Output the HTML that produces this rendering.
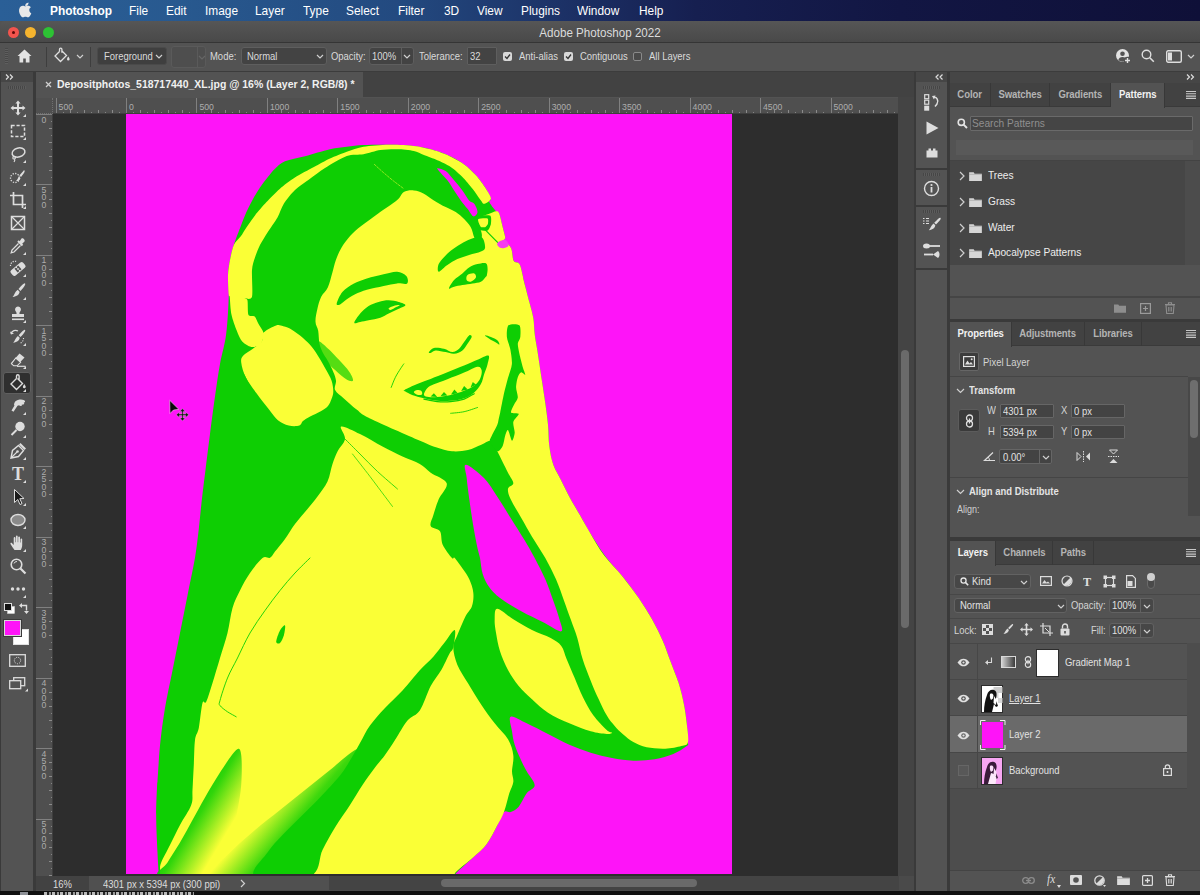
<!DOCTYPE html>
<html><head><meta charset="utf-8"><title>Adobe Photoshop 2022</title>
<style>
*{box-sizing:border-box;margin:0;padding:0}
html,body{width:1200px;height:895px;overflow:hidden;background:#1a1a1a}
body{font-family:"Liberation Sans",sans-serif;color:#e6e6e6;font-size:11px;-webkit-font-smoothing:antialiased}
#app{position:relative;width:1200px;height:895px;overflow:hidden;background:#535353}
.a{position:absolute}
i{display:block;position:absolute;font-style:normal}
svg{position:absolute;overflow:visible}
#menubar{left:0;top:0;width:1200px;height:21px;background:linear-gradient(90deg,#2a5f97 0%,#28598f 15%,#234a80 33%,#1c3166 47%,#161f50 58%,#121643 75%,#0f1038 100%)}
#menubar span{position:absolute;top:3px;font-size:13.2px;color:#fff;letter-spacing:0;white-space:nowrap}
#menubar span.b{font-weight:bold}
#titlebar{left:0;top:21px;width:1200px;height:21px;background:linear-gradient(#565656,#494949);border-top-left-radius:5px}
#titlebar .t{position:absolute;left:0;width:1200px;text-align:center;top:5px;font-size:12.5px;color:#dcdcdc}
.tl{position:absolute;top:6px;width:11px;height:11px;border-radius:50%}
#optbar{left:0;top:42px;width:1200px;height:30px;background:#535353;border-top:1.500px solid #353535;border-bottom:1px solid #3c3c3c}
#optbar span{position:absolute;font-size:10.5px;color:#dadada;white-space:nowrap;top:7px}
.dd{position:absolute;background:#434343;border:1px solid #606060;border-radius:3px}
.inp{position:absolute;background:#434343;border:1px solid #666;border-radius:1px}
#tabbar{left:36px;top:72px;width:878px;height:25px;background:#424242}
#tab{left:36px;top:72px;width:327px;height:25px;background:#535353}
#tab span{position:absolute;left:21px;top:6px;font-size:10.6px;font-weight:bold;color:#f0f0f0;white-space:nowrap}
#hruler{position:absolute;left:53px;top:98px;width:845px;height:16px;background:#4f4f4f;overflow:hidden;border-bottom:1px solid #3e3e3e}
#vruler{position:absolute;left:36px;top:114px;width:17px;height:762px;background:#4f4f4f;overflow:hidden;border-right:1px solid #3e3e3e}
#rcorner{position:absolute;left:36px;top:98px;width:17px;height:16px;background:#4f4f4f;border-right:1px dotted #707070;border-bottom:1px dotted #707070}
#hruler i.ht{top:0;width:1px;height:16px;background:#808080;margin-left:-53px}
#hruler i.hm{top:12px;width:1px;height:3px;background:#8a8a8a;margin-left:-53px}
#hruler i.hs{top:13.500px;width:1px;height:1.500px;background:#858585;margin-left:-53px}
#hruler span.hl{position:absolute;top:4px;font-size:8.700px;color:#adadad;margin-left:-53px}
#vruler i.vt{left:0;height:1px;width:17px;background:#808080;margin-top:-114px}
#vruler i.vm{left:13px;height:1px;width:3px;background:#8a8a8a;margin-top:-114px}
#vruler i.vs{left:14.500px;height:1px;width:1.500px;background:#858585;margin-top:-114px}
#vruler span.vl{position:absolute;left:4px;width:8px;font-size:8.700px;line-height:7.400px;color:#adadad;margin-top:-114px;text-align:center}
#canvas{position:absolute;left:53px;top:114px;width:845px;height:762px;background:#2d2d2d}
#left{left:0;top:72px;width:36px;height:823px;background:#535353;border-right:3px solid #3a3a3a;border-left:1px solid #3a3a3a}
#status{left:36px;top:876px;width:878px;height:15px;background:#4a4a4a}
#status span{position:absolute;top:2px;font-size:10.5px;color:#dcdcdc;white-space:nowrap}
#vscroll{left:898px;top:97px;width:16px;height:779px;background:#444}
#bottomstrip{left:0;top:891px;width:1200px;height:4px;background:#101010;z-index:50}
.panel{overflow:hidden}
.panel .tabs{position:absolute;left:0;top:0;width:250px;height:24px;background:#424242;border-bottom:1px solid #3a3a3a}
.panel .tb{position:absolute;top:0;height:24px;line-height:23px;text-align:center;font-size:10.600px;font-weight:bold;color:#b4b4b4;border-right:1px solid #383838;letter-spacing:-.1px}
.panel .tb.on{background:#535353;color:#f2f2f2;height:25px}
.panel .mn{left:236px;top:8px;width:10px;height:8px}
.tx{position:absolute;white-space:nowrap;color:#e2e2e2;line-height:1.150}
.prow{position:absolute;left:0;width:235px;height:25px}
.prow .ch{left:9px;top:7px;width:6px;height:10px}
.prow .fd{left:19px;top:7px;width:13px;height:10px}
.prow span{position:absolute;left:38px;top:5px;font-size:11.300px;color:#ededed;white-space:nowrap}
.eye{left:7px;width:13px;height:9px}
#menubar span,#optbar span,.tx,.prow span,#status span{transform:scaleX(.9);transform-origin:0 50%}
.panel .tb{font-size:10.600px}
.panel .tb b{display:inline-block;font-weight:bold;transform:scaleX(.9)}
#titlebar .t{transform:scaleX(.93)}
#tab span{transform:scaleX(.988);transform-origin:0 50%}

</style></head>
<body>
<div id="app">
<div id="menubar" class="a">
<svg style="left:19px;top:2px" width="13" height="16" viewBox="0 0 13 16"><path d="M9.1 3.1c.6-.7 1-1.700.9-2.700-.9.100-1.900.6-2.500 1.300-.5.600-1 1.600-.9 2.600 1 .1 1.900-.5 2.500-1.200zM10.800 8.500c0-2 1.600-2.900 1.700-3-.9-1.400-2.400-1.500-2.900-1.600-1.200-.1-2.400.7-3 .7-.6 0-1.600-.7-2.600-.7C2.700 4 1.400 4.800.7 6-.7 8.500.3 12.100 1.700 14.100c.7 1 1.500 2.100 2.500 2 1-.1 1.400-.6 2.600-.6s1.500.6 2.600.6 1.800-1 2.400-2c.8-1.100 1.100-2.200 1.100-2.300-.1 0-2.100-.8-2.100-3.300z" fill="#e8e8e8" transform="scale(.95)"/></svg>
<span class="b" style="left:50px">Photoshop</span>
<span style="left:129px">File</span>
<span style="left:166px">Edit</span>
<span style="left:205px">Image</span>
<span style="left:255px">Layer</span>
<span style="left:303px">Type</span>
<span style="left:346px">Select</span>
<span style="left:398px">Filter</span>
<span style="left:444px">3D</span>
<span style="left:477px">View</span>
<span style="left:521px">Plugins</span>
<span style="left:577px">Window</span>
<span style="left:639px">Help</span>
</div>
<div id="titlebar" class="a">
<i class="tl" style="left:8px;background:#f2544d"></i><i style="left:12px;top:10px;width:3px;height:3px;border-radius:50%;background:#5c0a08"></i>
<i class="tl" style="left:25px;background:#f6b42e"></i>
<i class="tl" style="left:43px;background:#2dc234"></i>
<div class="t">Adobe Photoshop 2022</div>
</div>
<div id="optbar" class="a">
<i style="left:5px;top:5px;width:3px;height:16px;background:repeating-linear-gradient(#484848 0 1px,#5e5e5e 1px 2px)"></i>
<svg style="left:17px;top:6px" width="15" height="14" viewBox="0 0 15 14"><path d="M7.500.5L.5 7h2v6.500h3.700V9.500h2.600v4h3.700V7h2z" fill="#e4e4e4"/></svg>
<i style="left:46px;top:4px;width:1px;height:20px;background:#3e3e3e"></i>
<svg style="left:53px;top:4px" width="20" height="18" viewBox="0 0 20 18"><path d="M6.500 4.500L2 9l5.500 5.500 6-6-5-5M6.500 4.500V2.300a1.200 1.200 0 012.400 0v3.500" fill="none" stroke="#e0e0e0" stroke-width="1.300"/><path d="M15.300 9.500c.8 1.300 1.300 2 1.300 2.700a1.300 1.300 0 01-2.600 0c0-.7.500-1.400 1.300-2.700z" fill="#e0e0e0"/></svg>
<svg style="left:76px;top:11px" width="8" height="5" viewBox="0 0 8 5"><path d="M1 1l3 3 3-3" fill="none" stroke="#d0d0d0" stroke-width="1.200"/></svg>
<i style="left:90px;top:4px;width:1px;height:20px;background:#3e3e3e"></i>
<div class="dd" style="left:97px;top:4px;width:70px;height:18px;background:#3f3f3f;border-color:#4a4a4a"></div>
<span style="left:104px">Foreground</span>
<svg style="left:155px;top:11px" width="8" height="5" viewBox="0 0 8 5"><path d="M1 1l3 3 3-3" fill="none" stroke="#d0d0d0" stroke-width="1.200"/></svg>
<div class="dd" style="left:171px;top:3px;width:35px;height:22px;background:#4e4e4e;border-color:#5a5a5a"></div>
<i style="left:197px;top:4px;width:1px;height:20px;background:#5a5a5a"></i>
<svg style="left:198px;top:12px" width="8" height="5" viewBox="0 0 8 5"><path d="M1 1l3 3 3-3" fill="none" stroke="#666" stroke-width="1.200"/></svg>
<span style="left:210px">Mode:</span>
<div class="dd" style="left:241px;top:4px;width:86px;height:18px;background:#434343;border-color:#5e5e5e"></div>
<span style="left:247px">Normal</span>
<svg style="left:316px;top:11px" width="8" height="5" viewBox="0 0 8 5"><path d="M1 1l3 3 3-3" fill="none" stroke="#d0d0d0" stroke-width="1.200"/></svg>
<span style="left:331px">Opacity:</span>
<div class="dd" style="left:369px;top:4px;width:45px;height:18px;background:#434343;border-color:#5e5e5e"></div>
<i style="left:401px;top:5px;width:1px;height:16px;background:#5e5e5e"></i>
<span style="left:372px">100%</span>
<svg style="left:403px;top:11px" width="8" height="5" viewBox="0 0 8 5"><path d="M1 1l3 3 3-3" fill="none" stroke="#d0d0d0" stroke-width="1.200"/></svg>
<span style="left:419px">Tolerance:</span>
<div class="dd" style="left:467px;top:4px;width:30px;height:18px;background:#434343;border-color:#5e5e5e;border-radius:1px"></div>
<span style="left:470px">32</span>
<i style="left:503px;top:9px;width:9px;height:9px;border-radius:2px;background:#d8d8d8"></i>
<svg style="left:504px;top:10px" width="7" height="7" viewBox="0 0 7 7"><path d="M1 3.500l2 2 3-4" fill="none" stroke="#333" stroke-width="1.300"/></svg>
<span style="left:519px">Anti-alias</span>
<i style="left:564px;top:9px;width:9px;height:9px;border-radius:2px;background:#d8d8d8"></i>
<svg style="left:565px;top:10px" width="7" height="7" viewBox="0 0 7 7"><path d="M1 3.500l2 2 3-4" fill="none" stroke="#333" stroke-width="1.300"/></svg>
<span style="left:580px">Contiguous</span>
<i style="left:633px;top:9px;width:9px;height:9px;border-radius:2px;border:1px solid #8a8a8a;background:#4a4a4a"></i>
<span style="left:649px">All Layers</span>
<!-- right icons -->
<svg style="left:1115px;top:5px" width="17" height="17" viewBox="0 0 17 17"><circle cx="7.500" cy="7.500" r="6.500" fill="#e2e2e2"/><circle cx="7.500" cy="5.800" r="2.300" fill="#535353"/><path d="M3.300 12c.6-2 2-3 4.200-3s3.600 1 4.200 3a6 6 0 01-8.400 0z" fill="#535353"/><circle cx="12.500" cy="12.500" r="3.800" fill="#535353"/><path d="M12.500 10v5M10 12.500h5" stroke="#e2e2e2" stroke-width="1.400"/></svg>
<svg style="left:1141px;top:6px" width="14" height="14" viewBox="0 0 14 14"><circle cx="5.500" cy="5.500" r="4.300" fill="none" stroke="#dedede" stroke-width="1.400"/><path d="M8.800 8.800l4 4" stroke="#dedede" stroke-width="1.600"/></svg>
<svg style="left:1166px;top:7px" width="16" height="13" viewBox="0 0 16 13"><rect x=".7" y=".7" width="14.600" height="11.600" rx="1.500" fill="none" stroke="#dedede" stroke-width="1.400"/><rect x="2" y="2.500" width="4" height="8" fill="#dedede"/></svg>
<svg style="left:1187px;top:11px" width="8" height="5" viewBox="0 0 8 5"><path d="M1 1l3 3 3-3" fill="none" stroke="#d0d0d0" stroke-width="1.200"/></svg>
</div>
<div id="tabbar" class="a"></div>
<div id="tab" class="a"><svg style="left:9px;top:9px" width="7" height="7" viewBox="0 0 7 7"><path d="M1 1l5 5M6 1L1 6" stroke="#cfcfcf" stroke-width="1.300"/></svg><span>Depositphotos_518717440_XL.jpg @ 16% (Layer 2, RGB/8) *</span></div>
<div id="vscroll" class="a"><i style="left:3px;top:253px;width:8px;height:278px;border-radius:4px;background:#6a6a6a"></i></div>
<div id="status" class="a">
<i style="left:0;top:0;width:53px;height:14px;background:#424242"></i>
<span style="left:17px">16%</span>
<i style="left:53px;top:0;width:240px;height:14px;background:#505050"></i>
<span style="left:67px">4301 px x 5394 px (300 ppi)</span>
<svg style="left:204px;top:3px" width="6" height="9" viewBox="0 0 6 9"><path d="M1 1l3.500 3.500L1 8" fill="none" stroke="#d0d0d0" stroke-width="1.200"/></svg>
<i style="left:293px;top:0;width:570px;height:14px;background:#444"></i>
<i style="left:405px;top:3px;width:256px;height:8px;border-radius:4px;background:#6a6a6a"></i>
</div>
<div id="bottomstrip" class="a"><i style="left:20px;top:1px;width:8px;height:3px;background:#8d9096"></i><i style="left:44px;top:1px;width:150px;height:3px;background:repeating-linear-gradient(90deg,#b9b9b9 0 3px,#222 3px 5px,#999 5px 7px,#1a1a1a 7px 8px)"></i></div>

<div id="hruler"><i class="ht" style="left:55.6px"></i><span class="hl" style="left:58.6px">500</span><i class="ht" style="left:126.0px"></i><span class="hl" style="left:129.0px">0</span><i class="ht" style="left:196.4px"></i><span class="hl" style="left:199.4px">500</span><i class="ht" style="left:266.9px"></i><span class="hl" style="left:269.9px">1000</span><i class="ht" style="left:337.3px"></i><span class="hl" style="left:340.3px">1500</span><i class="ht" style="left:407.8px"></i><span class="hl" style="left:410.8px">2000</span><i class="ht" style="left:478.2px"></i><span class="hl" style="left:481.2px">2500</span><i class="ht" style="left:548.7px"></i><span class="hl" style="left:551.7px">3000</span><i class="ht" style="left:619.1px"></i><span class="hl" style="left:622.1px">3500</span><i class="ht" style="left:689.6px"></i><span class="hl" style="left:692.6px">4000</span><i class="ht" style="left:760.0px"></i><span class="hl" style="left:763.0px">4500</span><i class="ht" style="left:830.5px"></i><span class="hl" style="left:833.5px">5000</span><i class="hs" style="left:62.6px"></i><i class="hm" style="left:69.6px"></i><i class="hs" style="left:76.7px"></i><i class="hm" style="left:83.7px"></i><i class="hs" style="left:90.8px"></i><i class="hm" style="left:97.8px"></i><i class="hs" style="left:104.9px"></i><i class="hm" style="left:111.9px"></i><i class="hs" style="left:119.0px"></i><i class="hs" style="left:133.0px"></i><i class="hm" style="left:140.1px"></i><i class="hs" style="left:147.1px"></i><i class="hm" style="left:154.2px"></i><i class="hs" style="left:161.2px"></i><i class="hm" style="left:168.3px"></i><i class="hs" style="left:175.3px"></i><i class="hm" style="left:182.4px"></i><i class="hs" style="left:189.4px"></i><i class="hs" style="left:203.5px"></i><i class="hm" style="left:210.5px"></i><i class="hs" style="left:217.6px"></i><i class="hm" style="left:224.6px"></i><i class="hs" style="left:231.7px"></i><i class="hm" style="left:238.7px"></i><i class="hs" style="left:245.8px"></i><i class="hm" style="left:252.8px"></i><i class="hs" style="left:259.9px"></i><i class="hs" style="left:273.9px"></i><i class="hm" style="left:281.0px"></i><i class="hs" style="left:288.0px"></i><i class="hm" style="left:295.1px"></i><i class="hs" style="left:302.1px"></i><i class="hm" style="left:309.2px"></i><i class="hs" style="left:316.2px"></i><i class="hm" style="left:323.3px"></i><i class="hs" style="left:330.3px"></i><i class="hs" style="left:344.4px"></i><i class="hm" style="left:351.4px"></i><i class="hs" style="left:358.5px"></i><i class="hm" style="left:365.5px"></i><i class="hs" style="left:372.6px"></i><i class="hm" style="left:379.6px"></i><i class="hs" style="left:386.7px"></i><i class="hm" style="left:393.7px"></i><i class="hs" style="left:400.8px"></i><i class="hs" style="left:414.8px"></i><i class="hm" style="left:421.9px"></i><i class="hs" style="left:428.9px"></i><i class="hm" style="left:436.0px"></i><i class="hs" style="left:443.0px"></i><i class="hm" style="left:450.1px"></i><i class="hs" style="left:457.1px"></i><i class="hm" style="left:464.2px"></i><i class="hs" style="left:471.2px"></i><i class="hs" style="left:485.3px"></i><i class="hm" style="left:492.3px"></i><i class="hs" style="left:499.4px"></i><i class="hm" style="left:506.4px"></i><i class="hs" style="left:513.5px"></i><i class="hm" style="left:520.5px"></i><i class="hs" style="left:527.6px"></i><i class="hm" style="left:534.6px"></i><i class="hs" style="left:541.6px"></i><i class="hs" style="left:555.7px"></i><i class="hm" style="left:562.8px"></i><i class="hs" style="left:569.8px"></i><i class="hm" style="left:576.9px"></i><i class="hs" style="left:583.9px"></i><i class="hm" style="left:591.0px"></i><i class="hs" style="left:598.0px"></i><i class="hm" style="left:605.1px"></i><i class="hs" style="left:612.1px"></i><i class="hs" style="left:626.2px"></i><i class="hm" style="left:633.2px"></i><i class="hs" style="left:640.3px"></i><i class="hm" style="left:647.3px"></i><i class="hs" style="left:654.4px"></i><i class="hm" style="left:661.4px"></i><i class="hs" style="left:668.5px"></i><i class="hm" style="left:675.5px"></i><i class="hs" style="left:682.5px"></i><i class="hs" style="left:696.6px"></i><i class="hm" style="left:703.7px"></i><i class="hs" style="left:710.7px"></i><i class="hm" style="left:717.8px"></i><i class="hs" style="left:724.8px"></i><i class="hm" style="left:731.9px"></i><i class="hs" style="left:738.9px"></i><i class="hm" style="left:745.9px"></i><i class="hs" style="left:753.0px"></i><i class="hs" style="left:767.1px"></i><i class="hm" style="left:774.1px"></i><i class="hs" style="left:781.2px"></i><i class="hm" style="left:788.2px"></i><i class="hs" style="left:795.3px"></i><i class="hm" style="left:802.3px"></i><i class="hs" style="left:809.4px"></i><i class="hm" style="left:816.4px"></i><i class="hs" style="left:823.4px"></i><i class="hs" style="left:837.5px"></i><i class="hm" style="left:844.6px"></i><i class="hs" style="left:851.6px"></i><i class="hm" style="left:858.7px"></i><i class="hs" style="left:865.7px"></i><i class="hm" style="left:872.8px"></i><i class="hs" style="left:879.8px"></i><i class="hm" style="left:886.8px"></i><i class="hs" style="left:893.9px"></i></div>
<div id="vruler"><i class="vt" style="top:114.0px"></i><span class="vl" style="top:116.5px">0</span><i class="vt" style="top:184.4px"></i><span class="vl" style="top:186.9px">5<br>0<br>0</span><i class="vt" style="top:254.9px"></i><span class="vl" style="top:257.4px">1<br>0<br>0<br>0</span><i class="vt" style="top:325.3px"></i><span class="vl" style="top:327.8px">1<br>5<br>0<br>0</span><i class="vt" style="top:395.8px"></i><span class="vl" style="top:398.3px">2<br>0<br>0<br>0</span><i class="vt" style="top:466.2px"></i><span class="vl" style="top:468.7px">2<br>5<br>0<br>0</span><i class="vt" style="top:536.7px"></i><span class="vl" style="top:539.2px">3<br>0<br>0<br>0</span><i class="vt" style="top:607.1px"></i><span class="vl" style="top:609.6px">3<br>5<br>0<br>0</span><i class="vt" style="top:677.6px"></i><span class="vl" style="top:680.1px">4<br>0<br>0<br>0</span><i class="vt" style="top:748.0px"></i><span class="vl" style="top:750.5px">4<br>5<br>0<br>0</span><i class="vt" style="top:818.5px"></i><span class="vl" style="top:821.0px">5<br>0<br>0<br>0</span><i class="vs" style="top:121.0px"></i><i class="vm" style="top:128.1px"></i><i class="vs" style="top:135.1px"></i><i class="vm" style="top:142.2px"></i><i class="vs" style="top:149.2px"></i><i class="vm" style="top:156.3px"></i><i class="vs" style="top:163.3px"></i><i class="vm" style="top:170.4px"></i><i class="vs" style="top:177.4px"></i><i class="vs" style="top:191.5px"></i><i class="vm" style="top:198.5px"></i><i class="vs" style="top:205.6px"></i><i class="vm" style="top:212.6px"></i><i class="vs" style="top:219.7px"></i><i class="vm" style="top:226.7px"></i><i class="vs" style="top:233.8px"></i><i class="vm" style="top:240.8px"></i><i class="vs" style="top:247.9px"></i><i class="vs" style="top:261.9px"></i><i class="vm" style="top:269.0px"></i><i class="vs" style="top:276.0px"></i><i class="vm" style="top:283.1px"></i><i class="vs" style="top:290.1px"></i><i class="vm" style="top:297.2px"></i><i class="vs" style="top:304.2px"></i><i class="vm" style="top:311.3px"></i><i class="vs" style="top:318.3px"></i><i class="vs" style="top:332.4px"></i><i class="vm" style="top:339.4px"></i><i class="vs" style="top:346.5px"></i><i class="vm" style="top:353.5px"></i><i class="vs" style="top:360.6px"></i><i class="vm" style="top:367.6px"></i><i class="vs" style="top:374.7px"></i><i class="vm" style="top:381.7px"></i><i class="vs" style="top:388.8px"></i><i class="vs" style="top:402.8px"></i><i class="vm" style="top:409.9px"></i><i class="vs" style="top:416.9px"></i><i class="vm" style="top:424.0px"></i><i class="vs" style="top:431.0px"></i><i class="vm" style="top:438.1px"></i><i class="vs" style="top:445.1px"></i><i class="vm" style="top:452.2px"></i><i class="vs" style="top:459.2px"></i><i class="vs" style="top:473.3px"></i><i class="vm" style="top:480.3px"></i><i class="vs" style="top:487.4px"></i><i class="vm" style="top:494.4px"></i><i class="vs" style="top:501.5px"></i><i class="vm" style="top:508.5px"></i><i class="vs" style="top:515.6px"></i><i class="vm" style="top:522.6px"></i><i class="vs" style="top:529.6px"></i><i class="vs" style="top:543.7px"></i><i class="vm" style="top:550.8px"></i><i class="vs" style="top:557.8px"></i><i class="vm" style="top:564.9px"></i><i class="vs" style="top:571.9px"></i><i class="vm" style="top:579.0px"></i><i class="vs" style="top:586.0px"></i><i class="vm" style="top:593.1px"></i><i class="vs" style="top:600.1px"></i><i class="vs" style="top:614.2px"></i><i class="vm" style="top:621.2px"></i><i class="vs" style="top:628.3px"></i><i class="vm" style="top:635.3px"></i><i class="vs" style="top:642.4px"></i><i class="vm" style="top:649.4px"></i><i class="vs" style="top:656.5px"></i><i class="vm" style="top:663.5px"></i><i class="vs" style="top:670.5px"></i><i class="vs" style="top:684.6px"></i><i class="vm" style="top:691.7px"></i><i class="vs" style="top:698.7px"></i><i class="vm" style="top:705.8px"></i><i class="vs" style="top:712.8px"></i><i class="vm" style="top:719.9px"></i><i class="vs" style="top:726.9px"></i><i class="vm" style="top:733.9px"></i><i class="vs" style="top:741.0px"></i><i class="vs" style="top:755.1px"></i><i class="vm" style="top:762.1px"></i><i class="vs" style="top:769.2px"></i><i class="vm" style="top:776.2px"></i><i class="vs" style="top:783.3px"></i><i class="vm" style="top:790.3px"></i><i class="vs" style="top:797.4px"></i><i class="vm" style="top:804.4px"></i><i class="vs" style="top:811.4px"></i><i class="vs" style="top:825.5px"></i><i class="vm" style="top:832.6px"></i><i class="vs" style="top:839.6px"></i><i class="vm" style="top:846.7px"></i><i class="vs" style="top:853.7px"></i><i class="vm" style="top:860.8px"></i><i class="vs" style="top:867.8px"></i><i class="vm" style="top:874.8px"></i></div>
<div id="rcorner"></div>
<div id="canvas"></div>
<svg id="art" style="left:0;top:0" width="1200" height="895" viewBox="0 0 1200 895">
<defs><clipPath id="ac"><rect x="126" y="114" width="606" height="760"/></clipPath>
<linearGradient id="st1" gradientUnits="userSpaceOnUse" x1="192" y1="800" x2="232" y2="824"><stop offset="0" stop-color="#0ece03"/><stop offset="0.3" stop-color="#0ece03" stop-opacity="0.85"/><stop offset="1" stop-color="#0ece03" stop-opacity="0"/></linearGradient>
<linearGradient id="st2" gradientUnits="userSpaceOnUse" x1="272" y1="800" x2="312" y2="834"><stop offset="0" stop-color="#0ece03" stop-opacity="0"/><stop offset="0.6" stop-color="#0ece03" stop-opacity="0.8"/><stop offset="1" stop-color="#0ece03" stop-opacity="1"/></linearGradient>
</defs>
<rect x="126" y="114" width="606" height="760" fill="#fe14f8"/>
<g clip-path="url(#ac)">
<path d="M305.0 156.2C297.5 158.2 290.0 159.2 285.0 161.2C280.0 163.3 277.9 166.0 275.0 168.8C272.1 171.5 270.0 174.4 267.5 177.5C265.0 180.6 262.5 183.8 260.0 187.5C257.5 191.2 254.8 195.8 252.5 200.0C250.2 204.2 248.1 208.3 246.2 212.5C244.4 216.7 243.3 219.6 241.2 225.0C239.2 230.4 235.6 239.2 233.8 245.0C231.9 250.8 231.0 255.0 230.0 260.0C229.0 265.0 228.2 269.2 228.0 275.0C227.8 280.8 229.0 285.2 228.8 295.0C228.5 304.8 227.7 322.2 226.2 333.8C224.8 345.2 221.9 353.5 220.0 364.0C218.1 374.5 216.7 384.8 215.0 396.5C213.3 408.2 211.5 422.8 210.0 434.0C208.5 445.2 207.5 454.0 206.2 464.0C205.0 474.0 203.8 483.2 202.5 494.0C201.2 504.8 200.0 518.4 198.8 529.0C197.5 539.6 196.9 546.7 195.0 557.8C193.1 568.8 190.0 583.0 187.5 595.5C185.0 608.0 182.5 620.5 180.0 633.0C177.5 645.5 175.0 658.0 172.5 670.5C170.0 683.0 167.1 695.5 165.0 708.0C162.9 720.5 161.2 733.2 160.0 745.5C158.8 757.8 157.9 776.4 157.5 781.8C157.1 787.1 157.7 772.0 157.5 777.5C157.3 783.0 156.2 802.5 156.2 815.0C156.2 827.5 157.1 842.5 157.5 852.5C157.9 862.5 158.5 870.4 158.8 875.0C159.0 879.6 159.0 875.8 159.0 880.0C159.0 884.2 109.7 896.7 159.0 900.0C208.3 903.3 405.7 903.3 455.0 900.0C504.3 896.7 455.1 884.2 455.0 880.0C454.9 875.8 451.6 878.4 454.7 874.7C457.7 870.9 468.0 862.4 473.3 857.3C478.7 852.2 482.7 849.3 486.7 844.0C490.7 838.7 494.4 830.7 497.3 825.3C500.2 820.0 501.8 814.2 504.0 812.0C506.2 809.8 508.2 812.9 510.7 812.0C513.1 811.1 516.0 809.8 518.7 806.7C521.3 803.6 524.0 796.9 526.7 793.3C529.3 789.8 534.7 789.0 534.7 785.3C534.7 781.7 528.9 775.4 526.7 771.3C524.4 767.2 523.3 765.1 521.3 760.7C519.3 756.2 516.2 749.6 514.7 744.7C513.1 739.8 512.7 736.0 512.0 731.3C511.3 726.7 508.2 718.0 510.7 716.7C513.1 715.3 520.4 720.4 526.7 723.3C532.9 726.2 540.9 730.4 548.0 734.0C555.1 737.6 562.2 741.6 569.3 744.7C576.4 747.8 583.6 750.4 590.7 752.7C597.8 754.9 604.9 756.7 612.0 758.0C619.1 759.3 626.2 760.4 633.3 760.7C640.4 760.9 648.0 760.4 654.7 759.3C661.3 758.2 668.0 756.2 673.3 754.0C678.7 751.8 684.2 748.0 686.7 746.0C689.1 744.0 688.0 745.8 688.0 742.0C688.0 738.2 687.3 729.6 686.7 723.3C686.0 717.1 685.3 711.3 684.0 704.7C682.7 698.0 680.9 690.4 678.7 683.3C676.4 676.2 673.3 669.1 670.7 662.0C668.0 654.9 665.8 647.8 662.7 640.7C659.6 633.6 656.0 626.4 652.0 619.3C648.0 612.2 643.6 605.1 638.7 598.0C633.8 590.9 628.0 583.3 622.7 576.7C617.3 570.0 612.0 565.1 606.7 558.0C601.3 550.9 595.1 541.1 590.7 534.0C586.2 526.9 583.6 521.6 580.0 515.3C576.4 509.1 572.4 502.4 569.3 496.7C566.2 490.9 564.0 486.0 561.3 480.7C558.7 475.3 555.3 470.4 553.3 464.7C551.3 458.9 550.2 452.7 549.3 446.0C548.4 439.3 548.7 431.8 548.0 424.7C547.3 417.6 546.4 411.3 545.3 403.3C544.2 395.3 542.7 385.6 541.3 376.7C540.0 367.8 538.4 357.1 537.3 350.0C536.2 342.9 535.3 339.3 534.7 334.0C534.0 328.7 534.2 323.3 533.3 318.0C532.4 312.7 531.0 308.3 529.3 302.0C527.7 295.7 524.7 284.4 523.6 280.0C522.5 275.7 523.5 278.5 522.8 275.9C522.1 273.2 521.0 266.6 519.4 264.1C517.9 261.6 515.0 263.4 513.6 260.8C512.2 258.1 512.6 251.5 511.1 248.2C509.5 244.8 505.3 242.5 504.4 240.6C503.4 238.8 505.5 239.5 505.2 237.3C504.9 235.1 503.7 231.1 502.7 227.2C501.7 223.3 500.4 216.5 499.3 213.8C498.2 211.2 497.6 213.3 496.0 211.3C494.3 209.4 490.1 204.2 489.3 202.1C488.4 200.0 491.5 201.0 490.9 198.7C490.4 196.5 488.4 192.6 485.9 188.7C483.4 184.8 479.5 179.3 475.9 175.3C472.2 171.2 468.9 167.7 464.1 164.4C459.4 161.0 452.9 157.7 447.4 155.1C441.8 152.6 436.2 150.8 430.6 149.3C425.0 147.7 420.8 146.7 413.8 145.9C406.8 145.2 397.1 144.9 388.7 144.8C380.3 144.6 370.5 144.8 363.5 145.1C356.5 145.4 352.4 146.1 346.8 146.8C341.2 147.5 337.0 147.7 330.0 149.3C323.0 150.9 312.5 154.3 305.0 156.2Z" fill="#0ece03"/>
<path d="M437.3 168.2C438.1 167.9 442.9 169.1 445.7 171.1C448.5 173.1 451.3 177.1 454.1 180.3C456.9 183.5 459.9 187.0 462.4 190.4C465.0 193.7 467.2 198.2 469.1 200.4C471.1 202.6 472.8 201.8 474.2 203.8C475.6 205.7 477.7 210.1 477.5 212.1C477.4 214.2 475.0 216.9 473.3 216.3C471.7 215.8 469.6 211.4 467.5 208.8C465.4 206.1 463.0 203.5 460.8 200.4C458.5 197.3 456.3 193.7 454.1 190.4C451.8 187.0 449.6 183.2 447.4 180.3C445.1 177.4 442.3 174.8 440.6 172.7C439.0 170.7 436.5 168.5 437.3 168.2Z" fill="#fe14f8"/>
<path d="M465.9 464.7C468.8 464.7 478.8 472.7 484.0 478.0C489.2 483.3 492.9 490.0 497.3 496.7C501.8 503.3 506.2 510.9 510.7 518.0C515.1 525.1 520.0 532.7 524.0 539.3C528.0 546.0 531.1 551.3 534.7 558.0C538.2 564.7 542.2 572.2 545.3 579.3C548.4 586.4 551.1 594.4 553.3 600.7C555.6 606.9 557.3 611.6 558.7 616.7C560.0 621.8 564.0 630.4 561.3 631.3C558.7 632.2 549.3 625.3 542.7 622.0C536.0 618.7 528.4 615.3 521.3 611.3C514.2 607.3 505.3 602.0 500.0 598.0C494.7 594.0 492.2 591.3 489.3 587.3C486.4 583.3 484.2 578.9 482.7 574.0C481.1 569.1 480.9 562.4 480.0 558.0C479.1 553.6 478.4 552.7 477.3 547.3C476.2 542.0 474.7 534.0 473.3 526.0C472.0 518.0 470.4 507.3 469.3 499.3C468.2 491.3 467.2 483.8 466.7 478.0C466.1 472.2 463.0 464.7 465.9 464.7Z" fill="#fe14f8"/>
<path d="M490.9 198.7C491.2 196.7 487.9 191.8 485.9 188.7C483.9 185.5 478.8 178.5 475.9 175.3C472.9 172.0 467.9 167.0 464.1 164.4C460.3 161.7 451.8 157.2 447.4 155.1C442.9 153.1 435.1 150.5 430.6 149.3C426.1 148.0 419.4 146.5 413.8 145.9C408.2 145.3 395.4 144.6 388.7 144.8C382.0 144.9 369.1 145.8 363.5 146.8C357.9 147.7 351.2 150.2 346.8 151.8C342.3 153.4 334.4 156.5 330.0 158.5C325.6 160.5 318.6 164.5 313.9 167.0C309.2 169.5 299.5 174.6 294.9 177.5C290.3 180.4 283.5 185.6 279.7 188.9C275.9 192.2 269.8 198.6 266.5 202.1C263.2 205.6 257.8 211.9 255.0 215.4C252.2 218.9 247.5 225.9 245.6 228.7C243.7 231.5 242.4 234.1 240.8 236.3C239.2 238.5 235.2 241.8 233.8 245.0C232.3 248.2 230.8 256.0 230.0 260.0C229.2 264.0 228.2 270.3 228.0 275.0C227.8 279.7 228.5 292.1 228.8 295.0C229.0 297.9 229.3 294.2 229.7 296.8C230.0 299.4 230.5 310.2 231.5 314.7C232.4 319.2 235.4 327.2 236.8 330.8C238.2 334.4 240.3 339.4 242.2 341.5C244.1 343.7 248.7 346.4 251.1 346.9C253.5 347.3 258.4 346.5 260.1 345.1C261.7 343.7 263.3 338.0 263.6 336.1C264.0 334.2 263.5 332.4 262.7 330.8C262.0 329.1 259.3 325.5 258.3 323.6C257.2 321.7 256.0 317.7 254.7 316.5C253.4 315.3 249.4 316.8 248.4 314.7C247.5 312.5 248.0 302.5 247.5 300.4C247.1 298.2 244.3 299.1 244.9 298.6C245.5 298.1 251.1 300.6 252.0 296.8C253.0 293.0 251.6 275.2 252.0 270.0C252.4 264.8 253.9 260.8 255.0 257.5C256.1 254.2 258.3 248.3 260.0 245.0C261.7 241.7 265.2 236.2 267.5 232.5C269.8 228.8 275.3 221.3 277.5 217.5C279.7 213.7 281.4 207.4 283.8 203.8C286.1 200.1 291.5 193.3 295.0 190.0C298.5 186.7 306.0 181.7 310.0 178.8C314.0 175.8 320.1 171.0 325.0 168.0C329.9 165.0 341.6 157.8 346.8 156.0C351.9 154.2 359.1 155.1 363.5 154.3C368.0 153.5 375.8 150.8 380.3 150.1C384.8 149.4 392.6 149.2 397.1 149.3C401.5 149.4 410.2 150.2 413.8 151.0C417.4 151.7 420.8 153.9 423.9 155.1C427.0 156.4 433.7 158.6 437.3 160.2C440.9 161.7 447.4 164.6 450.7 166.9C454.1 169.1 459.5 174.0 462.4 176.9C465.3 179.8 470.0 185.5 472.5 188.7C475.0 191.8 479.3 198.4 480.9 200.4C482.4 202.4 482.9 204.0 484.2 203.8C485.6 203.5 490.7 200.7 490.9 198.7Z" fill="#faff36"/>
<path d="M276.1 325.4C272.9 326.5 266.0 329.9 263.6 332.6C261.2 335.2 263.6 338.8 261.8 341.5C260.1 344.2 256.0 346.3 252.9 348.7C249.8 351.0 245.0 353.4 243.1 355.8C241.1 358.2 240.8 359.4 241.3 363.0C241.7 366.5 243.2 372.2 245.8 377.3C248.3 382.3 252.6 388.0 256.5 393.3C260.4 398.7 265.4 405.0 269.0 409.4C272.6 413.9 274.7 417.5 277.9 420.2C281.2 422.8 285.1 424.6 288.7 425.5C292.2 426.4 297.0 426.3 299.4 425.5C301.8 424.8 301.2 422.5 303.0 421.1C304.7 419.6 307.1 418.2 310.1 416.6C313.1 414.9 317.9 413.0 320.8 411.2C323.8 409.4 326.2 407.9 328.0 405.9C329.8 403.8 330.7 401.1 331.6 398.7C332.5 396.3 333.3 394.5 333.3 391.6C333.3 388.6 332.8 384.4 331.6 380.8C330.4 377.3 328.3 374.0 326.2 370.1C324.1 366.2 321.4 361.5 319.0 357.6C316.7 353.7 314.6 350.1 311.9 346.9C309.2 343.6 306.2 340.8 303.0 337.9C299.7 335.1 295.5 331.8 292.2 329.9C289.0 327.9 286.0 327.1 283.3 326.3C280.6 325.6 279.4 324.4 276.1 325.4Z" fill="#faff36"/>
<path d="M397.2 200.0C401.5 196.4 401.0 193.6 403.8 192.0C406.5 190.4 410.5 190.1 413.8 190.4C417.2 190.6 420.5 192.0 423.9 193.7C427.2 195.4 430.3 198.2 433.9 200.4C437.6 202.6 442.0 205.2 445.7 207.1C449.3 209.1 452.7 210.2 455.7 212.1C458.8 214.1 461.6 216.3 464.1 218.9C466.6 221.4 469.1 224.2 470.8 227.2C472.5 230.3 473.1 234.9 474.2 237.3C475.3 239.7 476.3 241.5 477.5 241.5C478.8 241.5 481.2 239.1 481.7 237.3C482.3 235.5 481.6 232.8 480.9 230.6C480.2 228.4 477.5 226.1 477.5 223.9C477.5 221.6 478.9 218.9 480.9 217.2C482.8 215.5 486.7 214.8 489.3 213.8C491.8 212.8 494.3 211.3 496.0 211.3C497.6 211.3 498.2 211.2 499.3 213.8C500.4 216.5 501.7 223.3 502.7 227.2C503.7 231.1 504.9 235.1 505.2 237.3C505.5 239.5 503.4 238.8 504.4 240.6C505.3 242.5 509.5 244.8 511.1 248.2C512.6 251.5 512.2 258.1 513.6 260.8C515.0 263.4 517.9 261.6 519.4 264.1C521.0 266.6 522.1 273.2 522.8 275.9C523.5 278.5 522.5 275.7 523.6 280.0C524.7 284.4 527.7 295.7 529.3 302.0C531.0 308.3 532.4 312.7 533.3 318.0C534.2 323.3 534.0 328.7 534.7 334.0C535.3 339.3 536.2 342.9 537.3 350.0C538.4 357.1 540.0 367.8 541.3 376.7C542.7 385.6 544.2 395.3 545.3 403.3C546.4 411.3 547.3 417.6 548.0 424.7C548.7 431.8 548.4 439.3 549.3 446.0C550.2 452.7 551.3 458.9 553.3 464.7C555.3 470.4 558.7 475.3 561.3 480.7C564.0 486.0 566.2 490.9 569.3 496.7C572.4 502.4 576.4 509.1 580.0 515.3C583.6 521.6 586.7 527.3 590.7 534.0C594.7 540.7 598.7 548.2 604.0 555.3C609.3 562.4 616.9 569.6 622.7 576.7C628.4 583.8 633.8 590.9 638.7 598.0C643.6 605.1 648.0 612.2 652.0 619.3C656.0 626.4 659.6 633.6 662.7 640.7C665.8 647.8 668.0 654.9 670.7 662.0C673.3 669.1 676.4 676.2 678.7 683.3C680.9 690.4 682.7 698.0 684.0 704.7C685.3 711.3 686.0 717.1 686.7 723.3C687.3 729.6 688.9 738.2 688.0 742.0C687.1 745.8 685.1 744.9 681.3 746.0C677.6 747.1 671.1 748.4 665.3 748.7C659.6 748.9 652.0 748.4 646.7 747.3C641.3 746.2 637.3 744.2 633.3 742.0C629.3 739.8 625.8 736.7 622.7 734.0C619.6 731.3 617.3 729.1 614.7 726.0C612.0 722.9 609.3 719.8 606.7 715.3C604.0 710.9 601.3 705.1 598.7 699.3C596.0 693.6 593.3 687.3 590.7 680.7C588.0 674.0 584.9 666.4 582.7 659.3C580.4 652.2 579.3 644.7 577.3 638.0C575.3 631.3 572.9 625.6 570.7 619.3C568.4 613.1 566.4 607.3 564.0 600.7C561.6 594.0 559.1 586.4 556.0 579.3C552.9 572.2 549.3 565.1 545.3 558.0C541.3 550.9 536.0 543.3 532.0 536.7C528.0 530.0 524.9 524.2 521.3 518.0C517.8 511.8 512.9 504.2 510.7 499.3C508.4 494.4 507.6 491.3 508.0 488.7C508.4 486.0 513.3 486.0 513.3 483.3C513.3 480.7 510.7 478.0 508.0 472.7C505.3 467.3 500.0 456.7 497.3 451.3C494.7 446.0 494.7 441.8 492.0 440.7C489.3 439.6 485.3 443.1 481.3 444.7C477.3 446.2 472.9 448.9 468.0 450.0C463.1 451.1 457.3 451.8 452.0 451.3C446.7 450.9 441.3 449.1 436.0 447.3C430.7 445.6 431.0 445.5 420.0 440.7C409.0 435.8 380.6 423.6 370.0 418.4C359.4 413.2 360.9 412.7 356.6 409.4C352.3 406.2 347.6 401.9 344.1 398.7C340.5 395.5 336.5 393.1 335.1 390.1C333.8 387.1 336.3 383.9 336.0 380.8C335.7 377.8 334.7 375.2 333.3 371.9C332.0 368.6 329.8 364.4 328.0 361.2C326.2 357.9 324.1 355.2 322.6 352.2C321.2 349.3 320.1 346.9 319.4 343.3C318.7 339.7 318.8 334.4 318.2 330.8C317.5 327.2 315.6 325.4 315.5 321.8C315.3 318.3 316.3 313.5 317.3 309.3C318.2 305.2 319.4 300.5 321.2 296.8C323.0 293.1 326.1 291.2 327.9 287.2C329.8 283.1 331.1 277.1 332.4 272.6C333.7 268.2 334.3 264.4 335.8 260.3C337.2 256.2 338.9 252.1 341.3 248.0C343.8 243.9 346.9 239.5 350.3 235.8C353.6 232.0 356.8 229.4 361.5 225.7C366.1 222.0 372.3 217.7 378.2 213.4C384.2 209.1 392.9 203.6 397.2 200.0Z" fill="#faff36"/>
<path d="M508.5 325.3C506.9 326.9 506.6 333.9 506.9 337.1C507.1 340.2 509.5 345.2 510.2 348.8C510.9 352.4 512.2 359.9 511.9 363.9C511.6 367.9 508.8 374.7 507.7 379.0C506.6 383.2 504.5 391.3 503.5 395.7C502.5 400.2 500.8 409.3 500.2 412.5C499.5 415.7 498.9 418.4 498.5 420.0C498.1 421.7 498.2 422.6 497.3 424.7C496.5 426.7 493.0 433.0 492.0 435.3C491.0 437.6 489.2 439.9 489.9 442.0C490.6 444.1 495.6 450.8 497.3 451.3C499.0 451.9 501.6 448.1 502.7 446.0C503.7 443.9 504.6 437.5 505.3 435.3C506.0 433.2 507.1 429.3 508.0 430.0C508.9 430.7 511.1 440.3 512.0 440.7C512.9 441.0 514.5 435.2 514.7 432.7C514.8 430.2 512.8 424.5 513.3 422.0C513.9 419.5 519.0 415.3 518.7 414.0C518.4 412.7 511.6 413.8 511.1 412.5C510.5 411.2 513.5 406.1 514.4 404.1C515.3 402.1 517.5 399.6 517.8 397.4C518.0 395.2 516.1 390.0 516.1 387.4C516.1 384.7 517.1 379.3 517.8 377.3C518.4 375.3 520.1 372.6 521.1 372.3C522.1 371.9 525.1 375.4 525.3 374.8C525.5 374.1 523.6 370.0 522.8 367.2C522.0 364.4 520.1 357.0 519.4 353.8C518.8 350.7 517.7 346.0 517.8 343.8C517.9 341.5 520.1 339.5 520.3 337.1C520.5 334.6 521.0 326.9 519.4 325.3C517.9 323.8 510.2 323.8 508.5 325.3Z" fill="#0ece03"/>
<path d="M341.2 426.5C343.8 425.7 353.1 430.7 360.0 434.0C366.9 437.3 375.4 442.8 382.5 446.5C389.6 450.2 396.3 453.6 402.5 456.5C408.7 459.4 415.1 461.3 419.8 464.0C424.4 466.7 426.2 469.4 430.7 472.7C435.2 475.9 445.3 478.9 446.7 483.3C448.0 487.8 440.9 494.0 438.7 499.3C436.4 504.7 434.7 510.9 433.3 515.3C432.0 519.8 429.6 523.3 430.7 526.0C431.8 528.7 438.0 528.2 440.0 531.3C442.0 534.4 440.7 540.2 442.7 544.7C444.7 549.1 450.0 555.8 452.0 558.0C454.0 560.2 452.9 556.2 454.7 558.0C456.4 559.8 460.2 565.1 462.7 568.7C465.1 572.2 467.6 575.3 469.3 579.3C471.1 583.3 472.9 588.2 473.3 592.7C473.8 597.1 473.3 602.0 472.0 606.0C470.7 610.0 467.8 611.8 465.3 616.7C462.9 621.6 459.3 630.2 457.3 635.3C455.3 640.4 453.3 642.4 453.3 647.3C453.3 652.2 454.9 658.7 457.3 664.7C459.8 670.7 464.0 676.7 468.0 683.3C472.0 690.0 476.9 698.0 481.3 704.7C485.8 711.3 490.2 717.6 494.7 723.3C499.1 729.1 504.9 734.0 508.0 739.3C511.1 744.7 512.7 750.0 513.3 755.3C514.0 760.7 512.0 766.9 512.0 771.3C512.0 775.8 513.8 778.3 513.3 782.0C512.9 785.7 510.9 788.3 509.3 793.3C507.8 798.3 506.0 806.7 504.0 812.0C502.0 817.3 500.2 820.0 497.3 825.3C494.4 830.7 490.7 838.7 486.7 844.0C482.7 849.3 478.2 852.9 473.3 857.3C468.4 861.8 460.4 867.8 457.3 870.7C454.2 873.6 455.1 873.1 454.7 874.7C454.3 876.2 454.9 875.8 455.0 880.0C455.1 884.2 504.2 896.7 455.0 900.0C405.8 903.3 209.2 903.3 160.0 900.0C110.8 896.7 160.0 885.0 160.0 880.0C160.0 875.0 159.8 872.9 160.0 870.0C160.2 867.1 159.6 866.7 161.2 862.5C162.9 858.3 166.9 851.2 170.0 845.0C173.1 838.8 176.5 831.7 180.0 825.0C183.5 818.3 189.2 810.8 191.2 805.0C193.3 799.2 192.1 796.7 192.5 790.0C192.9 783.3 193.3 773.3 193.8 765.0C194.2 756.7 194.2 746.2 195.0 740.0C195.8 733.8 197.5 734.2 198.8 728.0C200.0 721.8 201.2 707.4 202.5 703.0C203.8 698.6 204.6 705.1 206.2 701.8C207.9 698.4 210.2 690.3 212.5 683.0C214.8 675.7 217.5 666.3 220.0 658.0C222.5 649.7 225.4 641.3 227.5 633.0C229.6 624.7 230.4 615.1 232.5 608.0C234.6 600.9 237.1 596.3 240.0 590.5C242.9 584.7 246.2 578.4 250.0 573.0C253.8 567.6 259.2 560.5 262.5 558.0C265.8 555.5 267.9 558.8 270.0 557.8C272.1 556.7 272.5 554.6 275.0 551.5C277.5 548.4 281.7 543.6 285.0 539.0C288.3 534.4 291.2 529.0 295.0 524.0C298.8 519.0 303.8 513.6 307.5 509.0C311.2 504.4 314.2 501.1 317.5 496.5C320.8 491.9 325.0 486.9 327.5 481.5C330.0 476.1 330.8 469.0 332.5 464.0C334.2 459.0 335.4 455.7 337.5 451.5C339.6 447.3 344.4 443.2 345.0 439.0C345.6 434.8 338.8 427.3 341.2 426.5Z" fill="#faff36"/>
<path d="M497.3 608.7C500.4 608.7 507.6 615.8 513.3 619.3C519.1 622.9 525.8 626.9 532.0 630.0C538.2 633.1 545.8 635.3 550.7 638.0C555.6 640.7 558.7 642.4 561.3 646.0C564.0 649.6 564.4 654.0 566.7 659.3C568.9 664.7 572.0 671.8 574.7 678.0C577.3 684.2 579.6 690.4 582.7 696.7C585.8 702.9 589.3 709.8 593.3 715.3C597.3 720.9 603.6 727.1 606.7 730.0C609.8 732.9 612.0 732.0 612.0 732.7C612.0 733.3 610.2 734.2 606.7 734.0C603.1 733.8 596.9 733.1 590.7 731.3C584.4 729.6 576.4 726.4 569.3 723.3C562.2 720.2 554.2 716.7 548.0 712.7C541.8 708.7 536.9 703.8 532.0 699.3C527.1 694.9 522.7 690.9 518.7 686.0C514.7 681.1 511.1 675.8 508.0 670.0C504.9 664.2 502.0 657.6 500.0 651.3C498.0 645.1 496.9 638.0 496.0 632.7C495.1 627.3 494.4 623.3 494.7 619.3C494.9 615.3 494.2 608.7 497.3 608.7Z" fill="#faff36"/>
<path d="M454.7 630.0C453.1 629.3 447.6 638.9 444.0 643.3C440.4 647.8 437.3 652.2 433.3 656.7C429.3 661.1 425.1 664.4 420.0 670.0C414.9 675.6 408.3 684.2 402.5 690.5C396.7 696.8 390.4 702.2 385.0 708.0C379.6 713.8 374.2 719.7 370.0 725.5C365.8 731.3 363.3 737.2 360.0 743.0C356.7 748.8 353.3 755.1 350.0 760.5C346.7 765.9 345.0 769.3 340.0 775.5C335.0 781.7 326.7 790.5 320.0 797.5C313.3 804.5 306.2 811.2 300.0 817.5C293.8 823.8 287.9 829.2 282.5 835.0C277.1 840.8 272.1 845.6 267.5 852.5C262.9 859.4 247.9 872.3 255.0 876.2C262.1 880.2 298.8 880.6 310.0 876.2C321.2 871.9 318.3 858.1 322.5 850.0C326.7 841.9 330.4 835.0 335.0 827.5C339.6 820.0 345.4 812.1 350.0 805.0C354.6 797.9 358.3 791.2 362.5 785.0C366.7 778.8 371.2 772.5 375.0 767.5C378.8 762.5 381.7 759.6 385.0 755.0C388.3 750.4 391.2 745.8 395.0 740.0C398.8 734.2 403.4 725.4 407.5 720.5C411.6 715.6 415.9 716.2 419.8 710.5C423.6 704.8 427.1 692.8 430.7 686.0C434.3 679.2 438.2 675.3 441.3 670.0C444.4 664.7 447.3 657.8 449.3 654.0C451.3 650.2 452.4 651.3 453.3 647.3C454.2 643.3 456.2 630.7 454.7 630.0Z" fill="#0ece03"/>
<path d="M236.2 750.0C232.7 752.9 225.2 764.6 220.0 772.5C214.8 780.4 209.6 789.6 205.0 797.5C200.4 805.4 196.7 812.5 192.5 820.0C188.3 827.5 184.2 835.4 180.0 842.5C175.8 849.6 170.8 856.9 167.5 862.5C164.2 868.1 151.2 874.0 160.0 876.2C168.8 878.5 209.2 879.4 220.0 876.2C230.8 873.1 222.9 864.4 225.0 857.5C227.1 850.6 230.4 842.9 232.5 835.0C234.6 827.1 236.0 818.3 237.5 810.0C239.0 801.7 240.6 794.2 241.2 785.0C241.9 775.8 242.1 760.8 241.2 755.0C240.4 749.2 239.8 747.1 236.2 750.0Z" fill="url(#st1)"/>
<path d="M336.7 303.5C337.1 301.4 339.8 295.1 342.6 291.8C345.4 288.5 349.4 286.0 353.5 283.7C357.5 281.5 361.9 280.0 366.9 278.4C371.9 276.8 378.6 275.3 383.6 274.2C388.7 273.1 393.3 271.4 397.1 271.7C400.8 272.0 404.6 273.9 406.3 275.9C408.0 277.8 408.7 282.2 407.1 283.4C405.6 284.7 401.0 283.0 397.1 283.4C393.1 283.8 388.7 284.9 383.6 285.9C378.6 287.0 371.6 288.4 366.9 289.8C362.1 291.2 358.5 292.7 355.1 294.3C351.8 295.9 349.3 297.7 346.8 299.3C344.2 301.0 341.7 303.7 340.1 304.4C338.4 305.1 336.3 305.6 336.7 303.5Z" fill="#0ece03"/>
<path d="M354.3 322.8C354.3 321.4 357.8 316.4 360.2 313.6C362.6 310.8 365.5 308.0 368.6 306.0C371.6 304.1 375.3 302.8 378.6 301.9C382.0 300.9 385.3 300.2 388.7 300.2C392.0 300.2 395.9 301.0 398.7 301.9C401.5 302.7 405.7 303.9 405.4 305.2C405.2 306.5 399.9 308.0 397.1 309.4C394.3 310.8 391.5 312.2 388.7 313.6C385.9 315.0 383.6 316.7 380.3 317.8C376.9 318.9 371.9 319.6 368.6 320.3C365.2 321.0 362.6 321.6 360.2 322.0C357.8 322.4 354.3 324.2 354.3 322.8Z" fill="#0ece03"/>
<path d="M481.7 237.3C479.3 235.9 474.3 237.9 470.8 239.0C467.3 240.1 464.1 242.0 460.8 244.0C457.4 246.0 453.8 248.2 450.7 250.7C447.6 253.2 444.4 256.6 442.3 259.1C440.2 261.6 438.7 263.7 438.1 265.8C437.6 267.9 437.4 271.8 439.0 271.7C440.5 271.5 444.3 267.0 447.4 265.0C450.4 262.9 453.8 260.8 457.4 259.1C461.0 257.4 465.2 256.2 469.1 254.9C473.1 253.6 478.2 252.8 480.9 251.5C483.5 250.3 484.9 249.7 485.1 247.4C485.2 245.0 484.1 238.7 481.7 237.3Z" fill="#0ece03"/>
<path d="M449.0 288.4C449.0 287.3 451.8 282.6 454.1 280.1C456.3 277.5 459.9 275.5 462.4 273.4C465.0 271.3 466.6 269.0 469.1 267.5C471.7 265.9 474.7 264.8 477.5 264.1C480.3 263.4 484.2 262.4 485.9 263.3C487.6 264.1 487.4 267.0 487.6 269.1C487.7 271.2 487.0 274.6 486.7 275.9C486.5 277.1 486.9 275.7 485.9 276.7C484.9 277.7 483.1 280.6 480.9 281.7C478.6 282.9 475.6 282.9 472.5 283.4C469.4 284.0 465.5 284.5 462.4 285.1C459.4 285.6 456.3 286.2 454.1 286.8C451.8 287.3 449.0 289.6 449.0 288.4Z" fill="#0ece03"/>
<path d="M467.5 275.0C468.7 273.9 472.8 272.9 474.2 273.4C475.6 273.8 476.4 276.1 475.9 277.5C475.3 278.9 472.4 281.3 470.8 281.7C469.3 282.2 467.2 281.2 466.6 280.1C466.1 278.9 466.2 276.1 467.5 275.0Z" fill="#faff36"/>
<path d="M428.9 352.1C429.5 351.3 431.4 348.5 433.9 348.0C436.5 347.4 440.9 348.1 444.0 348.8C447.1 349.5 449.9 352.1 452.4 352.1C454.9 352.1 457.1 350.5 459.1 348.8C461.0 347.1 462.4 344.3 464.1 342.1C465.8 339.9 467.9 336.2 469.1 335.4C470.4 334.5 471.9 335.7 471.7 337.1C471.4 338.5 469.0 341.5 467.5 343.8C465.9 346.0 464.7 348.8 462.4 350.5C460.2 352.1 456.9 353.5 454.1 353.8C451.3 354.1 448.7 352.7 445.7 352.1C442.6 351.6 438.1 350.3 435.6 350.5C433.1 350.6 431.7 352.7 430.6 353.0C429.5 353.3 428.4 353.0 428.9 352.1Z" fill="#0ece03"/>
<path d="M485.1 335.4C485.4 335.1 488.8 336.2 490.9 337.1C493.0 337.9 496.2 339.2 497.6 340.4C499.0 341.7 499.7 344.3 499.3 344.6C498.9 344.9 496.8 343.1 495.1 342.1C493.5 341.1 490.9 339.9 489.3 338.7C487.6 337.6 484.8 335.7 485.1 335.4Z" fill="#0ece03"/>
<path d="M391.2 387.4C391.9 385.7 393.8 380.4 395.4 377.3C396.9 374.2 399.0 371.1 400.4 368.9C401.8 366.7 403.2 364.7 403.8 363.9" fill="none" stroke="#0ece03" stroke-width="0.9" stroke-linecap="round"/>
<path d="M404.6 389.9C406.6 388.6 412.8 385.8 417.2 384.0C421.5 382.2 425.6 380.9 430.6 379.0C435.6 377.0 441.8 374.5 447.4 372.3C452.9 370.0 459.1 367.7 464.1 365.6C469.1 363.5 473.5 361.4 477.5 359.7C481.6 358.0 486.7 354.8 488.4 355.5C490.1 356.2 488.3 360.8 487.6 363.9C486.9 367.0 485.4 370.6 484.2 373.9C483.1 377.3 482.6 380.9 480.9 384.0C479.2 387.1 477.0 390.0 474.2 392.4C471.4 394.8 468.0 396.9 464.1 398.2C460.2 399.6 455.2 400.3 450.7 400.8C446.2 401.2 441.8 401.2 437.3 400.8C432.8 400.3 428.1 399.2 423.9 398.2C419.7 397.3 415.2 396.0 412.1 394.9C409.1 393.8 406.7 392.4 405.4 391.5C404.2 390.7 402.6 391.1 404.6 389.9Z" fill="#0ece03"/>
<path d="M423.9 394.9C423.6 393.4 425.6 389.9 427.2 388.2C428.9 386.4 430.6 385.8 433.9 384.3C437.3 382.9 442.3 381.3 447.4 379.3C452.4 377.3 459.1 374.7 464.1 372.6C469.1 370.5 474.6 367.1 477.5 366.7C480.5 366.4 481.3 368.5 481.7 370.6C482.1 372.6 481.3 376.5 480.0 379.0C478.8 381.5 476.8 383.7 474.2 385.7C471.5 387.6 468.0 389.2 464.1 390.7C460.2 392.2 455.2 393.9 450.7 394.9C446.2 395.9 440.9 396.6 437.3 396.9C433.7 397.2 431.1 397.2 428.9 396.9C426.7 396.6 424.2 396.3 423.9 394.9Z" fill="#faff36"/>
<path d="M413.8 392.0C413.8 391.3 415.9 390.2 417.2 390.0C418.4 389.9 420.6 390.3 421.4 391.0C422.1 391.8 422.6 393.8 421.9 394.4C421.2 395.0 418.5 395.1 417.2 394.7C415.8 394.3 413.8 392.8 413.8 392.0Z" fill="#faff36"/>
<path d="M450.7 413.3C452.9 413.1 459.6 412.6 464.1 411.7C468.6 410.7 475.3 408.2 477.5 407.5" fill="none" stroke="#0ece03" stroke-width="0.9" stroke-linecap="round"/>
<path d="M318.2 341.5C319.2 340.6 322.8 343.9 326.2 346.9C329.6 349.8 334.8 355.2 338.7 359.4C342.6 363.6 347.1 368.3 349.4 371.9C351.8 375.5 353.6 379.6 353.0 380.8C352.4 382.0 348.8 380.8 345.9 379.0C342.9 377.3 338.4 373.1 335.1 370.1C331.9 367.1 328.7 364.1 326.2 361.2C323.7 358.2 321.3 355.5 319.9 352.2C318.6 349.0 317.1 342.4 318.2 341.5Z" fill="#0ece03" opacity="0.7"/>
<path d="M355.0 750.0C350.0 752.5 338.3 763.3 330.0 770.0C321.7 776.7 313.3 783.3 305.0 790.0C296.7 796.7 288.3 803.3 280.0 810.0C271.7 816.7 263.3 822.9 255.0 830.0C246.7 837.1 237.5 844.8 230.0 852.5C222.5 860.2 205.0 872.3 210.0 876.2C215.0 880.2 249.6 880.2 260.0 876.2C270.4 872.3 267.9 859.4 272.5 852.5C277.1 845.6 282.1 840.8 287.5 835.0C292.9 829.2 298.8 823.8 305.0 817.5C311.2 811.2 318.8 803.8 325.0 797.5C331.2 791.2 336.7 787.1 342.5 780.0C348.3 772.9 357.9 760.0 360.0 755.0C362.1 750.0 360.0 747.5 355.0 750.0Z" fill="url(#st2)"/>
<path d="M430.6 396.6L433.9 393.2L437.3 396.9Z" fill="#0ece03"/>
<path d="M440.6 396.1L444.0 392.0L447.4 395.4Z" fill="#0ece03"/>
<path d="M451.0 394.4L454.4 389.4L457.7 393.2Z" fill="#0ece03"/>
<path d="M461.1 391.0L464.1 386.0L467.8 389.4Z" fill="#0ece03"/>
<path d="M470.5 387.4L472.8 382.0L476.2 384.8Z" fill="#0ece03"/>
<path d="M423.9 399.1C426.1 399.5 432.8 401.2 437.3 401.6C441.8 402.0 446.2 402.0 450.7 401.6C455.2 401.2 460.2 400.4 464.1 399.1C468.0 397.8 472.5 394.6 474.2 393.7" fill="none" stroke="#0ece03" stroke-width="1.2" stroke-linecap="round"/>
<path d="M345.0 439.0C347.5 441.5 354.6 448.6 360.0 454.0C365.4 459.4 371.2 465.7 377.5 471.5C383.8 477.3 394.2 486.1 397.5 489.0" fill="none" stroke="#0ece03" stroke-width="0.8" stroke-linecap="round"/>
<path d="M352.5 454.0C355.4 457.8 364.6 469.4 370.0 476.5C375.4 483.6 381.2 491.5 385.0 496.5C388.8 501.5 391.2 504.8 392.5 506.5" fill="none" stroke="#0ece03" stroke-width="0.7" stroke-linecap="round"/>
<path d="M310.0 558.0C307.5 560.5 300.0 567.6 295.0 573.0C290.0 578.4 285.0 584.2 280.0 590.5C275.0 596.8 270.0 603.4 265.0 610.5C260.0 617.6 254.6 625.1 250.0 633.0C245.4 640.9 241.2 650.5 237.5 658.0C233.8 665.5 230.4 670.9 227.5 678.0C224.6 685.1 221.2 695.9 220.0 700.5C218.8 705.1 218.8 703.6 220.0 705.5C221.2 707.4 224.8 709.9 227.5 711.8C230.2 713.6 234.8 715.9 236.2 716.8" fill="none" stroke="#0ece03" stroke-width="0.9" stroke-linecap="round"/>
<path d="M276.2 641.8C276.2 639.7 278.5 633.2 280.0 630.5C281.5 627.8 284.4 624.7 285.0 625.5C285.6 626.3 284.6 632.6 283.8 635.5C282.9 638.4 281.2 642.0 280.0 643.0C278.8 644.0 276.2 643.8 276.2 641.8Z" fill="#0ece03"/>
<path d="M475.0 216.3C476.4 215.5 488.5 214.7 490.1 215.5C491.7 216.3 491.2 222.4 490.9 223.9C490.7 225.4 488.8 230.0 487.6 230.6C486.4 231.2 480.4 230.4 479.2 229.7C478.0 229.1 476.3 225.2 475.9 223.9C475.4 222.5 473.6 217.2 475.0 216.3Z" fill="#0ece03"/>
<path d="M478.4 218.9C479.2 218.4 486.6 218.0 487.6 218.5C488.5 219.0 488.2 223.0 487.9 223.9C487.7 224.8 485.8 226.9 485.1 227.2C484.4 227.5 481.5 227.3 480.9 226.9C480.3 226.5 479.1 223.8 478.9 223.0C478.6 222.2 477.5 219.3 478.4 218.9Z" fill="#faff36"/>
<path d="M485.1 229.7C486.0 230.7 488.8 233.5 490.9 235.6C493.0 237.7 496.5 241.2 497.6 242.3" fill="none" stroke="#0ece03" stroke-width="1.2" stroke-linecap="round"/>
<path d="M497.6 242.7C498.8 241.5 503.4 239.3 505.2 239.8C507.0 240.3 509.0 244.3 508.5 245.7C508.1 247.1 504.4 248.0 502.7 248.2C501.0 248.3 499.3 247.4 498.5 246.5C497.6 245.6 496.5 243.8 497.6 242.7Z" fill="#f53cf0"/>
<path d="M374.4 164.4C376.0 165.8 380.4 170.0 383.6 172.7C386.9 175.5 390.4 178.5 393.7 181.1C397.1 183.8 402.1 187.4 403.8 188.7" fill="none" stroke="#faff36" stroke-width="0.8" stroke-linecap="round" stroke-dasharray="2 1.5" opacity="0.7"/>
<path d="M388.7 308.2C389.2 307.6 391.9 306.4 393.7 305.9C395.5 305.4 399.4 304.9 399.6 305.2C399.7 305.5 396.1 307.1 394.5 307.9C393.0 308.7 391.3 309.8 390.4 309.9C389.4 310.0 388.1 308.9 388.7 308.2Z" fill="#faff36"/>
<path d="M243.1 372.8C244.4 375.3 247.7 382.5 251.1 388.0C254.5 393.5 259.8 400.8 263.6 405.9C267.5 410.9 270.5 414.8 274.4 418.4C278.2 421.9 282.8 425.8 286.9 427.3C290.9 428.8 296.6 427.3 298.5 427.3" fill="none" stroke="#0ece03" stroke-width="0.7" stroke-linecap="round"/>
</g>
<path d="M169.700 400.300L170 413.500L173.500 410L178.800 409.300Z" fill="#0a0a0a" stroke="#f6c6f2" stroke-width="0.600"/>
<path d="M182.500 408.600l2.600 3h-1.900v2.500h2.500v-1.900l3 2.600-3 2.600v-1.900h-2.500v2.500h1.900l-2.600 3-2.600-3h1.900v-2.500h-2.500v1.900l-3-2.600 3-2.600v1.900h2.500v-2.500h-1.900z" fill="#0c1a0c" stroke="#f9b0f5" stroke-width="0.400"/>
</svg>

<div id="left" class="a">
<i style="left:0;top:0;width:32px;height:10px;background:#464646"></i>
<svg style="left:4px;top:2px" width="9" height="6" viewBox="0 0 9 6"><path d="M1 .5L3.500 3 1 5.500M5 .5L7.500 3 5 5.500" fill="none" stroke="#dddddd" stroke-width="1.200"/></svg>
<i style="left:7px;top:14px;width:18px;height:3px;background:repeating-linear-gradient(90deg,#464646 0 1px,#5c5c5c 1px 2px)"></i>
<i style="left:2px;top:299.7px;width:28px;height:22px;border-radius:3px;background:#2f2f2f;border:1px solid #5f5f5f"></i>
<svg style="left:6.5px;top:26.3px" width="20" height="20" viewBox="0 0 20 20"><path d="M10 2.500l2.600 3H11v3.500h3.500V7.400l3 2.600-3 2.600V11H11v3.500h1.600L10 17.500l-2.600-3H9V11H5.500v1.600L2.500 10l3-2.600V9H9V5.500H7.400z" fill="#dddddd"/><path d="M19 16v3h-3z" fill="#dddddd" transform="translate(-1,0)"/></svg>
<svg style="left:6.5px;top:49.2px" width="20" height="20" viewBox="0 0 20 20"><rect x="3.500" y="4.500" width="13" height="11" fill="none" stroke="#dddddd" stroke-width="1.500" stroke-dasharray="3.200 1.800"/><path d="M19 16v3h-3z" fill="#dddddd" transform="translate(-1,0)"/></svg>
<svg style="left:6.5px;top:72.0px" width="20" height="20" viewBox="0 0 20 20"><ellipse cx="10.500" cy="8.500" rx="6.500" ry="4.500" fill="none" stroke="#dddddd" stroke-width="1.500" transform="rotate(-15 10.500 8.500)"/><path d="M6 12c-1.500 1-1.500 3 0 3s2-1.500.5-2.500M6.500 15c.5 1 .3 2-.5 3" fill="none" stroke="#dddddd" stroke-width="1.200"/><path d="M19 16v3h-3z" fill="#dddddd" transform="translate(-1,0)"/></svg>
<svg style="left:6.5px;top:94.9px" width="20" height="20" viewBox="0 0 20 20"><circle cx="7" cy="11" r="4.500" fill="none" stroke="#dddddd" stroke-width="1.300" stroke-dasharray="1.300 1.300"/><path d="M16.500 3.500c.8.800-.5 3-3.500 6.500l-1.600-1.600c3.500-3.500 4.400-5.600 5.100-4.900zM10.800 9.600l1.600 1.600c-.5 2-2.500 3.300-4.400 2.800 1.500-.8 1.800-2.900 2.800-4.400z" fill="#dddddd"/><path d="M19 16v3h-3z" fill="#dddddd" transform="translate(-1,0)"/></svg>
<svg style="left:6.5px;top:117.8px" width="20" height="20" viewBox="0 0 20 20"><path d="M5.500 2v12.500H18M2 5.500h12.500V18" fill="none" stroke="#dddddd" stroke-width="1.700"/><path d="M19 16v3h-3z" fill="#dddddd" transform="translate(-1,0)"/></svg>
<svg style="left:6.5px;top:140.7px" width="20" height="20" viewBox="0 0 20 20"><rect x="3.500" y="3.500" width="13" height="13" fill="none" stroke="#dddddd" stroke-width="1.500"/><path d="M3.500 3.500l13 13M16.500 3.500l-13 13" stroke="#dddddd" stroke-width="1.200"/></svg>
<svg style="left:6.5px;top:163.5px" width="20" height="20" viewBox="0 0 20 20"><path d="M13.500 2.500c1.500-1 4 1.500 3 3l-2.300 2.300 1 1-1.400 1.400-4.500-4.500 1.400-1.400 1 1z" fill="#dddddd"/><path d="M10.500 7.500l-6.500 6.500-.8 2.800 2.800-.8 6.500-6.500" fill="none" stroke="#dddddd" stroke-width="1.300"/><path d="M19 16v3h-3z" fill="#dddddd" transform="translate(-1,0)"/></svg>
<svg style="left:6.5px;top:186.4px" width="20" height="20" viewBox="0 0 20 20"><rect x="2" y="7.500" width="16" height="7" rx="2" fill="#dddddd" transform="rotate(-40 10 11)"/><rect x="7.500" y="8.500" width="5" height="5" fill="#535353" transform="rotate(-40 10 11)"/><circle cx="10" cy="11" r=".9" fill="#dddddd"/><circle cx="8.500" cy="9.500" r=".7" fill="#dddddd"/><circle cx="11.500" cy="12.500" r=".7" fill="#dddddd"/><path d="M2.500 8a4.500 4.500 0 016-4.500" fill="none" stroke="#dddddd" stroke-width="1.200" stroke-dasharray="1.200 1.200"/><path d="M19 16v3h-3z" fill="#dddddd" transform="translate(-1,0)"/></svg>
<svg style="left:6.5px;top:209.3px" width="20" height="20" viewBox="0 0 20 20"><path d="M17 2.500c.9.700-.7 3.300-4.500 7.500l-2-2C14 4 16.200 1.800 17 2.500zM9.700 8.800l1.900 1.900c-.2 2.500-2.500 4.800-7.100 5.300 2-1.500 2.200-5 5.200-7.200z" fill="#dddddd"/><path d="M19 16v3h-3z" fill="#dddddd" transform="translate(-1,0)"/></svg>
<svg style="left:6.5px;top:232.1px" width="20" height="20" viewBox="0 0 20 20"><path d="M10 2.500a3 3 0 012.200 5c-.6.700-.9 1.500-.7 2.500h4.500v3H4v-3h4.500c.2-1-.1-1.800-.7-2.500a3 3 0 012.200-5z" fill="#dddddd"/><rect x="4" y="14.500" width="12" height="1.600" fill="#dddddd"/><path d="M19 16v3h-3z" fill="#dddddd" transform="translate(-1,0)"/></svg>
<svg style="left:6.5px;top:255.0px" width="20" height="20" viewBox="0 0 20 20"><path d="M17 3c.9.700-.7 3.300-4.500 7l-1.800-1.800C14 4.500 16.200 2.300 17 3zM9.900 9l1.800 1.800c-.2 2.300-2.300 4.400-6.500 4.900 1.800-1.400 2-4.600 4.700-6.700z" fill="#dddddd"/><path d="M3 6.500a5 5 0 017-2.500" fill="none" stroke="#dddddd" stroke-width="1.300"/><path d="M2 4.500l1 3 3-1z" fill="#dddddd"/><path d="M15.500 11a5 5 0 01-3 5" fill="none" stroke="#dddddd" stroke-width="1.100" stroke-dasharray="1.200 1.200"/><path d="M19 16v3h-3z" fill="#dddddd" transform="translate(-1,0)"/></svg>
<svg style="left:6.5px;top:277.9px" width="20" height="20" viewBox="0 0 20 20"><path d="M11.500 3.500l5 4-7.500 8H5.500l-2.500-2.300z" fill="#dddddd"/><path d="M7.800 8l4.800 4.300-3.500 3.500H5.700l-2.300-2.200z" fill="#535353" stroke="#dddddd" stroke-width="1.100"/><path d="M9 16.300h8.500" stroke="#dddddd" stroke-width="1.200"/><path d="M19 16v3h-3z" fill="#dddddd" transform="translate(-1,0)"/></svg>
<svg style="left:6.5px;top:300.7px" width="20" height="20" viewBox="0 0 20 20"><path d="M8.500 5.500L3 11l5.500 5.500 6-6-5-5M8.500 5.500V3a1.300 1.300 0 012.600 0v4.500" fill="none" stroke="#dddddd" stroke-width="1.400"/><path d="M16.300 11c.9 1.400 1.400 2.200 1.400 2.900a1.400 1.400 0 01-2.800 0c0-.7.500-1.500 1.400-2.900z" fill="#dddddd"/><path d="M19 16v3h-3z" fill="#dddddd" transform="translate(-1,0)"/></svg>
<svg style="left:6.5px;top:323.6px" width="20" height="20" viewBox="0 0 20 20"><path d="M6 9c0-3 2-5 5.500-5.500 3-.4 5 .5 5.500 1.500.3 1-.5 1.500-1.500 1.500.8.300 1 1.200.3 1.800-.5.500-1.300.4-2 .2.300.6 0 1.300-.6 1.500-.8.300-1.600-.2-2.200-.7l-1.500.4-4 6-2-1.200 3-5z" fill="#dddddd"/><path d="M19 16v3h-3z" fill="#dddddd" transform="translate(-1,0)"/></svg>
<svg style="left:6.5px;top:346.5px" width="20" height="20" viewBox="0 0 20 20"><circle cx="12" cy="7.500" r="4.700" fill="#dddddd"/><path d="M8.500 11l-5 5" stroke="#dddddd" stroke-width="2"/><path d="M19 16v3h-3z" fill="#dddddd" transform="translate(-1,0)"/></svg>
<svg style="left:6.5px;top:369.4px" width="20" height="20" viewBox="0 0 20 20"><path d="M3 17l1.500-7.500 6-5 5 5-5 6z" fill="none" stroke="#dddddd" stroke-width="1.400"/><path d="M3.500 16.500l5.500-5.500" stroke="#dddddd" stroke-width="1.100"/><circle cx="9.500" cy="10.500" r="1.300" fill="#dddddd"/><path d="M11 3.500l5.500 5.500 1.500-1.500-5.500-5.500z" fill="#dddddd"/><path d="M19 16v3h-3z" fill="#dddddd" transform="translate(-1,0)"/></svg>
<span class="tx" style="left:11px;top:392.7px;font-family:'Liberation Serif',serif;font-weight:bold;font-size:18px;line-height:1;color:#dddddd;transform:none">T</span>
<svg style="left:6.5px;top:392.2px" width="20" height="20" viewBox="0 0 20 20"><path d="M19 16v3h-3z" fill="#dddddd" transform="translate(-1,0)"/></svg>
<svg style="left:6.5px;top:415.1px" width="20" height="20" viewBox="0 0 20 20"><path d="M6.500 2.500v13l3.300-3 2.200 5 2-.9-2.200-4.900 4.200-.2z" fill="#1b1b1b" stroke="#dddddd" stroke-width="1"/><path d="M19 16v3h-3z" fill="#dddddd" transform="translate(-1,0)"/></svg>
<svg style="left:6.5px;top:438.0px" width="20" height="20" viewBox="0 0 20 20"><ellipse cx="10" cy="10" rx="7" ry="5.500" fill="#8a8a8a" stroke="#dddddd" stroke-width="1.400"/><path d="M19 16v3h-3z" fill="#dddddd" transform="translate(-1,0)"/></svg>
<svg style="left:6.5px;top:460.8px" width="20" height="20" viewBox="0 0 20 20"><path d="M6.500 17c-1.500-2-3-4-4-6-.4-1 .8-1.700 1.600-.8l1.600 1.800V5c0-1.200 1.700-1.200 1.700 0v4.200h.5V3.500c0-1.200 1.800-1.200 1.800 0v5.700h.5V4.300c0-1.200 1.800-1.200 1.800 0v5.200h.5V6.300c0-1.200 1.700-1.200 1.700 0V12c0 2-.7 3.700-1.500 5z" fill="#dddddd"/><path d="M19 16v3h-3z" fill="#dddddd" transform="translate(-1,0)"/></svg>
<svg style="left:6.5px;top:483.7px" width="20" height="20" viewBox="0 0 20 20"><circle cx="8.500" cy="8.500" r="5.300" fill="none" stroke="#dddddd" stroke-width="1.600"/><path d="M12.500 12.500l5 5" stroke="#dddddd" stroke-width="2.200"/><path d="M6 7.500a3 3 0 013-2" fill="none" stroke="#dddddd" stroke-width="1"/></svg>
<svg style="left:6.5px;top:506.6px" width="20" height="20" viewBox="0 0 20 20"><circle cx="4.500" cy="10" r="1.700" fill="#dddddd"/><circle cx="10" cy="10" r="1.700" fill="#dddddd"/><circle cx="15.500" cy="10" r="1.700" fill="#dddddd"/><path d="M19 16v3h-3z" fill="#dddddd" transform="translate(-1,0)"/></svg>
<svg style="left:3px;top:531px" width="11" height="11" viewBox="0 0 11 11"><rect x="3.500" y="3.500" width="7" height="7" fill="#fff" stroke="#ddd" stroke-width=".5"/><rect x=".5" y=".5" width="7" height="7" fill="#111" stroke="#ddd" stroke-width="1"/></svg>
<svg style="left:18px;top:531px" width="11" height="11" viewBox="0 0 11 11"><path d="M2.500 2.500h5v5" fill="none" stroke="#dddddd" stroke-width="1.400"/><path d="M0 2.500L3 0v5zM7.500 11L5 8h5z" fill="#dddddd"/></svg>
<i style="left:12px;top:556.5px;width:16px;height:16px;background:#fff;border:1px solid #e0e0e0"></i>
<i style="left:3px;top:547.5px;width:16.500px;height:16.500px;background:#fe14f8;border:1px solid #d8d8d8;box-shadow:0 0 0 1px #3a3a3a"></i>
<svg style="left:8px;top:582px" width="17" height="13" viewBox="0 0 17 13"><rect x=".7" y=".7" width="15.600" height="11.600" fill="none" stroke="#dddddd" stroke-width="1.300"/><circle cx="8.500" cy="6.500" r="3.200" fill="none" stroke="#dddddd" stroke-width="1" stroke-dasharray="1.100 1.100"/></svg>
<svg style="left:8px;top:605px" width="20" height="16" viewBox="0 0 20 16"><rect x="4.700" y=".7" width="11" height="8" fill="none" stroke="#dddddd" stroke-width="1.300"/><rect x=".7" y="3.700" width="11" height="8" fill="#535353" stroke="#dddddd" stroke-width="1.300"/><path d="M19 11.500v3h-3z" fill="#dddddd"/></svg>
</div>
<div id="dockgap" class="a" style="left:914px;top:72px;width:286px;height:819px;background:#3a3a3a"></div>
<!-- icon strip -->
<div id="istrip" class="a" style="left:916px;top:72px;width:31px;height:819px;background:#535353">
<i style="left:0;top:0;width:31px;height:10px;background:#464646"></i>
<svg style="left:19px;top:2px" width="9" height="6" viewBox="0 0 9 6"><path d="M3.500 .5L1 3l2.500 2.500M7.500 .5L5 3l2.500 2.500" fill="none" stroke="#ddd" stroke-width="1.200"/></svg>
<i style="left:7px;top:14px;width:17px;height:3px;background:repeating-linear-gradient(90deg,#464646 0 1px,#5c5c5c 1px 2px)"></i>
<svg style="left:8px;top:22px" width="16" height="17" viewBox="0 0 16 17"><rect x=".7" y=".7" width="4" height="4" fill="none" stroke="#ddd" stroke-width="1.200"/><rect x=".7" y="6.200" width="4" height="4" fill="none" stroke="#ddd" stroke-width="1.200"/><rect x=".2" y="11.700" width="5" height="5" fill="#ddd"/><path d="M9 3.500c4-1 6 3 4 6.500l-2 2.500" fill="none" stroke="#ddd" stroke-width="1.500"/><path d="M8 2l3.500-.5-1.500 4z" fill="#ddd"/></svg>
<svg style="left:9px;top:49px" width="14" height="14" viewBox="0 0 14 14"><path d="M1.500 .5l12 6.500-12 6.500z" fill="#ddd"/></svg>
<svg style="left:10px;top:75px" width="12" height="11" viewBox="0 0 12 11"><path d="M.5 3.500h2V1.500h2.500v2h2V1.500h2.500v2h2v7H.5z" fill="#ddd"/></svg>
<i style="left:0;top:96px;width:31px;height:2px;background:#3a3a3a"></i>
<i style="left:7px;top:101px;width:17px;height:3px;background:repeating-linear-gradient(90deg,#464646 0 1px,#5c5c5c 1px 2px)"></i>
<svg style="left:7px;top:108px" width="17" height="17" viewBox="0 0 17 17"><circle cx="8.500" cy="8.500" r="7" fill="none" stroke="#ddd" stroke-width="1.400"/><circle cx="8.500" cy="5" r="1.100" fill="#ddd"/><rect x="7.600" y="7" width="1.800" height="5.500" fill="#ddd"/></svg>
<i style="left:0;top:133px;width:31px;height:2px;background:#3a3a3a"></i>
<i style="left:7px;top:138px;width:17px;height:3px;background:repeating-linear-gradient(90deg,#464646 0 1px,#5c5c5c 1px 2px)"></i>
<svg style="left:6px;top:144px" width="20" height="18" viewBox="0 0 20 18"><path d="M18.500 2c.9.700-.8 3-4.500 6.500l-1.800-1.800C15.700 3.500 17.700 1.300 18.500 2zM11.500 7.500l1.800 1.800c-.2 2.300-2.300 4.400-6.500 4.900 1.800-1.400 2-4.600 4.700-6.700z" fill="#ddd"/><path d="M1 2.500h1.500M4 2.500h3M1 5h1.500M4 5h3M1 7.500h1.500M4 7.500h3" stroke="#ddd" stroke-width="1.200"/></svg>
<svg style="left:6px;top:171px" width="20" height="16" viewBox="0 0 20 16"><ellipse cx="4.500" cy="3" rx="3.500" ry="2.500" fill="#ddd"/><path d="M7 3h11" stroke="#ddd" stroke-width="1.800"/><path d="M2 11.500h9" stroke="#ddd" stroke-width="1.800"/><path d="M11 11.500l5-3.500c2 1.500 2 5.500 0 7z" fill="#ddd"/></svg>
<i style="left:0;top:196px;width:31px;height:2px;background:#3a3a3a"></i>
</div>
<!-- panel column header -->
<div class="a" style="left:950px;top:72px;width:250px;height:11px;background:#464646"></div>
<svg style="left:1186px;top:74px" width="9" height="6" viewBox="0 0 9 6"><path d="M1 .5L3.500 3 1 5.500M5 .5L7.500 3 5 5.500" fill="none" stroke="#ddd" stroke-width="1.200"/></svg>

<!-- Patterns panel -->
<div class="a panel" style="left:950px;top:83px;width:250px;height:236px;background:#535353">
<div class="tabs"><span class="tb" style="left:0;width:41px"><b>Color</b></span><span class="tb" style="left:41px;width:59px"><b>Swatches</b></span><span class="tb" style="left:100px;width:61px"><b>Gradients</b></span><span class="tb on" style="left:161px;width:54px"><b>Patterns</b></span>
<svg class="mn" viewBox="0 0 10 8"><path d="M0 .5h10M0 2.800h10M0 5.100h10M0 7.400h10" stroke="#c8c8c8" stroke-width="1.100"/></svg></div>
<svg style="left:7px;top:35px" width="11" height="11" viewBox="0 0 11 11"><circle cx="4.300" cy="4.300" r="3.100" fill="none" stroke="#e4e4e4" stroke-width="1.600"/><path d="M6.600 6.600l3.400 3.400" stroke="#e4e4e4" stroke-width="1.900"/></svg>
<div class="inp" style="left:20px;top:33px;width:223px;height:15px;background:#454545;border-color:#6a6a6a"></div>
<span class="tx" style="left:22px;top:34px;font-size:11.300px;color:#8f8f8f">Search Patterns</span>
<i style="left:6px;top:57px;width:237px;height:15px;background:#595959"></i>
<i style="left:0;top:78px;width:235px;height:104px;background:#464646"></i>
<i style="left:235px;top:78px;width:15px;height:104px;background:#4c4c4c"></i>
<i style="left:0;top:77px;width:250px;height:1px;background:#434343"></i>
<div class="prow" style="top:81.300px"><svg class="ch" viewBox="0 0 6 10"><path d="M1 1l4 4-4 4" fill="none" stroke="#cfcfcf" stroke-width="1.200"/></svg><svg class="fd" viewBox="0 0 14 11"><path d="M0 1.500h5l1 1.500h8v8H0z" fill="#d6d6d6"/><path d="M0 3.700h14" stroke="#9a9a9a" stroke-width=".6"/></svg><span>Trees</span></div>
<div class="prow" style="top:106.900px"><svg class="ch" viewBox="0 0 6 10"><path d="M1 1l4 4-4 4" fill="none" stroke="#cfcfcf" stroke-width="1.200"/></svg><svg class="fd" viewBox="0 0 14 11"><path d="M0 1.500h5l1 1.500h8v8H0z" fill="#d6d6d6"/><path d="M0 3.700h14" stroke="#9a9a9a" stroke-width=".6"/></svg><span>Grass</span></div>
<div class="prow" style="top:132.500px"><svg class="ch" viewBox="0 0 6 10"><path d="M1 1l4 4-4 4" fill="none" stroke="#cfcfcf" stroke-width="1.200"/></svg><svg class="fd" viewBox="0 0 14 11"><path d="M0 1.500h5l1 1.500h8v8H0z" fill="#d6d6d6"/><path d="M0 3.700h14" stroke="#9a9a9a" stroke-width=".6"/></svg><span>Water</span></div>
<div class="prow" style="top:158.100px"><svg class="ch" viewBox="0 0 6 10"><path d="M1 1l4 4-4 4" fill="none" stroke="#cfcfcf" stroke-width="1.200"/></svg><svg class="fd" viewBox="0 0 14 11"><path d="M0 1.500h5l1 1.500h8v8H0z" fill="#d6d6d6"/><path d="M0 3.700h14" stroke="#9a9a9a" stroke-width=".6"/></svg><span>Apocalypse Patterns</span></div>
<i style="left:0;top:213px;width:250px;height:2px;background:#454545"></i>
<svg style="left:164px;top:220px" width="12" height="10" viewBox="0 0 14 11"><path d="M0 1.500h5l1 1.500h8v8H0z" fill="#8e8e8e"/></svg>
<svg style="left:190px;top:220px" width="11" height="11" viewBox="0 0 11 11"><rect x=".6" y=".6" width="9.800" height="9.800" fill="none" stroke="#9a9a9a" stroke-width="1.200"/><path d="M5.500 3v5M3 5.500h5" stroke="#9a9a9a" stroke-width="1.200"/></svg>
<svg style="left:215px;top:219px" width="10" height="12" viewBox="0 0 10 12"><path d="M1 3h8l-.7 8.500H1.700zM0 2.500h10M3.500 2.500V.8h3v1.700" fill="none" stroke="#8e8e8e" stroke-width="1.100"/><path d="M3.500 5v4.500M5 5v4.500M6.500 5v4.500" stroke="#8e8e8e" stroke-width=".8"/></svg>
</div>

<!-- Properties panel -->
<div class="a panel" style="left:950px;top:322px;width:250px;height:215px;background:#535353">
<div class="tabs"><span class="tb on" style="left:0;width:62px"><b>Properties</b></span><span class="tb" style="left:62px;width:73px"><b>Adjustments</b></span><span class="tb" style="left:135px;width:57px"><b>Libraries</b></span>
<svg class="mn" viewBox="0 0 10 8"><path d="M0 .5h10M0 2.800h10M0 5.100h10M0 7.400h10" stroke="#c8c8c8" stroke-width="1.100"/></svg></div>
<i style="left:9px;top:30px;width:20px;height:19px;border-radius:2px;background:#3c3c3c;border:1px solid #666"></i>
<svg style="left:13px;top:34px" width="12" height="11" viewBox="0 0 12 11"><rect x=".6" y=".6" width="10.800" height="9.800" fill="none" stroke="#e0e0e0" stroke-width="1.200"/><path d="M2 8.500l2.500-4 2 3 1.500-1.500 2 2.500z" fill="#e0e0e0"/><circle cx="8.700" cy="3.300" r="1" fill="#e0e0e0"/></svg>
<span class="tx" style="left:33px;top:34px;font-size:10.500px;color:#d4d4d4">Pixel Layer</span>
<i style="left:0;top:54px;width:238px;height:1px;background:#454545"></i>
<svg style="left:6px;top:66px" width="9" height="6" viewBox="0 0 9 6"><path d="M1 1l3.500 3.500L8 1" fill="none" stroke="#cfcfcf" stroke-width="1.200"/></svg>
<span class="tx" style="left:19px;top:62px;font-size:10.500px;font-weight:bold;color:#e4e4e4">Transform</span>
<i style="left:8px;top:87px;width:22px;height:23px;border-radius:3px;background:#3a3a3a;border:1px solid #5c5c5c"></i>
<svg style="left:14.500px;top:91.500px" width="9" height="14" viewBox="0 0 9 14"><rect x="1.500" y="1" width="6" height="6" rx="3" fill="none" stroke="#e0e0e0" stroke-width="1.300"/><rect x="1.500" y="7" width="6" height="6" rx="3" fill="none" stroke="#e0e0e0" stroke-width="1.300"/><path d="M4.500 4.500v5" stroke="#e0e0e0" stroke-width="1.300"/></svg>
<span class="tx" style="left:37px;top:82px;font-size:10.500px;color:#d4d4d4">W</span>
<div class="inp" style="left:50px;top:82px;width:54px;height:14px"></div><span class="tx" style="left:53px;top:83px;font-size:10.500px">4301 px</span>
<span class="tx" style="left:111px;top:82px;font-size:10.500px;color:#d4d4d4">X</span>
<div class="inp" style="left:121px;top:82px;width:54px;height:14px"></div><span class="tx" style="left:124px;top:83px;font-size:10.500px">0 px</span>
<span class="tx" style="left:38px;top:103px;font-size:10.500px;color:#d4d4d4">H</span>
<div class="inp" style="left:50px;top:103px;width:54px;height:14px"></div><span class="tx" style="left:53px;top:104px;font-size:10.500px">5394 px</span>
<span class="tx" style="left:111px;top:103px;font-size:10.500px;color:#d4d4d4">Y</span>
<div class="inp" style="left:121px;top:103px;width:54px;height:14px"></div><span class="tx" style="left:124px;top:104px;font-size:10.500px">0 px</span>
<svg style="left:33px;top:129px" width="13" height="11" viewBox="0 0 13 11"><path d="M12 9.500H1.500L10 1.500" fill="none" stroke="#dcdcdc" stroke-width="1.200"/><path d="M6.500 9.500a5 5 0 00-1.500-3.500" fill="none" stroke="#dcdcdc" stroke-width="1"/></svg>
<div class="inp" style="left:49px;top:127px;width:53px;height:15px;border-radius:2px"></div><i style="left:89px;top:128px;width:1px;height:13px;background:#666"></i>
<span class="tx" style="left:53px;top:129px;font-size:10.500px">0.00°</span>
<svg style="left:92px;top:133px" width="8" height="5" viewBox="0 0 8 5"><path d="M1 1l3 3 3-3" fill="none" stroke="#d0d0d0" stroke-width="1.200"/></svg>
<svg style="left:126px;top:129px" width="15" height="11" viewBox="0 0 15 11"><path d="M1 1.500l4 4-4 4z" fill="none" stroke="#dcdcdc" stroke-width="1"/><path d="M14 1.500l-4 4 4 4z" fill="#dcdcdc"/><path d="M7.500 0v11" stroke="#dcdcdc" stroke-width="1" stroke-dasharray="1.500 1"/></svg>
<svg style="left:158px;top:127px" width="11" height="15" viewBox="0 0 11 15"><path d="M1.500 1l4 4 4-4z" fill="none" stroke="#dcdcdc" stroke-width="1"/><path d="M1.500 14l4-4 4 4z" fill="#dcdcdc"/><path d="M0 7.500h11" stroke="#dcdcdc" stroke-width="1" stroke-dasharray="1.500 1"/></svg>
<i style="left:0;top:155px;width:238px;height:1px;background:#454545"></i>
<svg style="left:6px;top:167px" width="9" height="6" viewBox="0 0 9 6"><path d="M1 1l3.500 3.500L8 1" fill="none" stroke="#cfcfcf" stroke-width="1.200"/></svg>
<span class="tx" style="left:19px;top:163px;font-size:10.500px;font-weight:bold;color:#e4e4e4">Align and Distribute</span>
<span class="tx" style="left:7px;top:182px;font-size:10px;color:#cfcfcf">Align:</span>
<i style="left:238px;top:55px;width:12px;height:139px;background:#484848"></i>
<i style="left:240px;top:58px;width:8px;height:58px;border-radius:4px;background:#6e6e6e"></i>
</div>

<!-- Layers panel -->
<div class="a panel" style="left:950px;top:541px;width:250px;height:350px;background:#535353">
<div class="tabs"><span class="tb on" style="left:0;width:46px"><b>Layers</b></span><span class="tb" style="left:46px;width:57px"><b>Channels</b></span><span class="tb" style="left:103px;width:41px"><b>Paths</b></span>
<svg class="mn" viewBox="0 0 10 8"><path d="M0 .5h10M0 2.800h10M0 5.100h10M0 7.400h10" stroke="#c8c8c8" stroke-width="1.100"/></svg></div>
<!-- filter row -->
<div class="dd" style="left:4px;top:33px;width:77px;height:15px;background:#474747;border-color:#626262"></div>
<svg style="left:10px;top:36px" width="9" height="9" viewBox="0 0 11 11"><circle cx="4.300" cy="4.300" r="3.100" fill="none" stroke="#e4e4e4" stroke-width="1.600"/><path d="M6.600 6.600l3.400 3.400" stroke="#e4e4e4" stroke-width="1.900"/></svg>
<span class="tx" style="left:22px;top:34px;font-size:10.500px">Kind</span>
<svg style="left:70px;top:39px" width="8" height="5" viewBox="0 0 8 5"><path d="M1 1l3 3 3-3" fill="none" stroke="#d0d0d0" stroke-width="1.200"/></svg>
<svg style="left:90px;top:35px" width="12" height="10" viewBox="0 0 12 10"><rect x=".6" y=".6" width="10.800" height="8.800" fill="none" stroke="#dcdcdc" stroke-width="1.200"/><path d="M2 7.500l2.500-3.500 2 2.500 1.500-1 2 2z" fill="#dcdcdc"/></svg>
<svg style="left:111px;top:34px" width="12" height="12" viewBox="0 0 12 12"><circle cx="6" cy="6" r="5" fill="none" stroke="#dcdcdc" stroke-width="1.200"/><path d="M2.500 9.500a5 5 0 007-7z" fill="#dcdcdc"/></svg>
<span class="tx" style="left:133px;top:33px;font-size:13.500px;font-family:'Liberation Serif',serif;font-weight:bold;color:#e0e0e0">T</span>
<svg style="left:153px;top:34px" width="13" height="13" viewBox="0 0 13 13"><rect x="2.500" y="2.500" width="8" height="8" fill="none" stroke="#dcdcdc" stroke-width="1.200"/><rect x=".5" y=".5" width="3.500" height="3.500" fill="#dcdcdc"/><rect x="9" y=".5" width="3.500" height="3.500" fill="#dcdcdc"/><rect x=".5" y="9" width="3.500" height="3.500" fill="#dcdcdc"/><rect x="9" y="9" width="3.500" height="3.500" fill="#dcdcdc"/></svg>
<svg style="left:176px;top:34px" width="10" height="13" viewBox="0 0 10 13"><path d="M.6 .6h6l2.800 2.800v9H.6z" fill="none" stroke="#dcdcdc" stroke-width="1.200"/><rect x="1.500" y="6" width="5" height="5" fill="#dcdcdc"/></svg>
<i style="left:197px;top:34px;width:8px;height:14px;border-radius:4px;border:1px solid #6a6a6a;background:#4a4a4a"></i>
<i style="left:197px;top:32px;width:8px;height:8px;border-radius:50%;background:#cfcfcf"></i>
<i style="left:0;top:53px;width:250px;height:1px;background:#474747"></i>
<!-- blend row -->
<div class="dd" style="left:4px;top:57px;width:113px;height:15px;background:#474747;border-color:#626262"></div>
<span class="tx" style="left:10px;top:58px;font-size:10.500px">Normal</span>
<svg style="left:107px;top:63px" width="8" height="5" viewBox="0 0 8 5"><path d="M1 1l3 3 3-3" fill="none" stroke="#d0d0d0" stroke-width="1.200"/></svg>
<span class="tx" style="left:121px;top:58px;font-size:10.500px;color:#d4d4d4">Opacity:</span>
<div class="dd" style="left:159px;top:57px;width:45px;height:15px;background:#474747;border-color:#626262"></div><i style="left:190px;top:58px;width:1px;height:13px;background:#626262"></i>
<span class="tx" style="left:162px;top:58px;font-size:10.500px">100%</span>
<svg style="left:193px;top:63px" width="8" height="5" viewBox="0 0 8 5"><path d="M1 1l3 3 3-3" fill="none" stroke="#d0d0d0" stroke-width="1.200"/></svg>
<i style="left:0;top:77px;width:250px;height:1px;background:#474747"></i>
<!-- lock row -->
<span class="tx" style="left:4px;top:83px;font-size:10.500px;color:#d4d4d4">Lock:</span>
<svg style="left:32px;top:83px" width="11" height="11" viewBox="0 0 11 11"><rect x=".5" y=".5" width="10" height="10" fill="none" stroke="#dcdcdc" stroke-width="1"/><path d="M1 1h3v3H1zM7 1h3v3H7zM4 4h3v3H4zM1 7h3v3H1zM7 7h3v3H7z" fill="#dcdcdc"/></svg>
<svg style="left:51px;top:82px" width="13" height="13" viewBox="0 0 13 13"><path d="M12 1c.7.600-.5 2.300-3.500 5.300l-1.400-1.400C10 2 11.300.5 12 1zM6.500 5.500l1.400 1.400c-.2 1.900-1.800 3.600-5.400 4 1.500-1.200 1.700-3.700 4-5.400z" fill="#dcdcdc"/></svg>
<svg style="left:70px;top:82px" width="13" height="13" viewBox="0 0 13 13"><path d="M6.500 0l2.200 2.500H7.300v3.200h3.200V4.300L13 6.500l-2.500 2.200V7.300H7.300v3.200h1.400L6.500 13l-2.200-2.500h1.400V7.300H2.500v1.400L0 6.500l2.500-2.200v1.400h3.200V2.500H4.300z" fill="#dcdcdc"/></svg>
<svg style="left:90px;top:82px" width="13" height="13" viewBox="0 0 13 13"><path d="M3 0v10h10M0 3h10v10" fill="none" stroke="#dcdcdc" stroke-width="1.200"/><path d="M5 5l4 4" stroke="#dcdcdc" stroke-width="1"/></svg>
<svg style="left:110px;top:82px" width="10" height="13" viewBox="0 0 10 13"><rect x=".5" y="5.500" width="9" height="7" rx="1" fill="#dcdcdc"/><path d="M2.500 5.500V3.500a2.500 2.500 0 015 0v2" fill="none" stroke="#dcdcdc" stroke-width="1.400"/><rect x="4.200" y="8" width="1.600" height="2.500" fill="#535353"/></svg>
<span class="tx" style="left:141px;top:83px;font-size:10.500px;color:#d4d4d4">Fill:</span>
<div class="dd" style="left:159px;top:82px;width:45px;height:15px;background:#474747;border-color:#626262"></div><i style="left:190px;top:83px;width:1px;height:13px;background:#626262"></i>
<span class="tx" style="left:162px;top:83px;font-size:10.500px">100%</span>
<svg style="left:193px;top:88px" width="8" height="5" viewBox="0 0 8 5"><path d="M1 1l3 3 3-3" fill="none" stroke="#d0d0d0" stroke-width="1.200"/></svg>
<!-- layers list -->
<i style="left:0;top:102px;width:250px;height:227px;background:#4d4d4d"></i>
<i style="left:0;top:102px;width:237px;height:145px;background:#535353"></i>
<i style="left:0;top:174.500px;width:237px;height:36px;background:#6a6a6a"></i>
<i style="left:0;top:102px;width:237px;height:1px;background:#474747"></i>
<i style="left:0;top:138px;width:237px;height:1px;background:#474747"></i>
<i style="left:0;top:174px;width:237px;height:1px;background:#474747"></i>
<i style="left:0;top:210.500px;width:237px;height:1px;background:#474747"></i>
<i style="left:0;top:247px;width:237px;height:1px;background:#474747"></i>
<i style="left:27px;top:102px;width:1px;height:145px;background:#474747"></i>
<!-- eyes -->
<svg class="eye" style="top:117px" viewBox="0 0 13 9"><path d="M.5 4.500C2.500 1.500 4.500 .7 6.500 .7s4 .8 6 3.800c-2 3-4 3.800-6 3.800s-4-.8-6-3.800z" fill="#e2e2e2"/><circle cx="6.500" cy="4.500" r="2.300" fill="#535353"/><circle cx="6.500" cy="4.500" r="1.100" fill="#e2e2e2"/></svg>
<svg class="eye" style="top:153px" viewBox="0 0 13 9"><path d="M.5 4.500C2.500 1.500 4.500 .7 6.500 .7s4 .8 6 3.800c-2 3-4 3.800-6 3.800s-4-.8-6-3.800z" fill="#e2e2e2"/><circle cx="6.500" cy="4.500" r="2.300" fill="#535353"/><circle cx="6.500" cy="4.500" r="1.100" fill="#e2e2e2"/></svg>
<svg class="eye" style="top:189.500px" viewBox="0 0 13 9"><path d="M.5 4.500C2.500 1.500 4.500 .7 6.500 .7s4 .8 6 3.800c-2 3-4 3.800-6 3.800s-4-.8-6-3.800z" fill="#e2e2e2"/><circle cx="6.500" cy="4.500" r="2.300" fill="#6a6a6a"/><circle cx="6.500" cy="4.500" r="1.100" fill="#e2e2e2"/></svg>
<i style="left:8px;top:224px;width:11px;height:11px;border:1px solid #666;background:#585858"></i>
<!-- row 1 -->
<svg style="left:35px;top:116px" width="8" height="9" viewBox="0 0 8 9"><path d="M6.500 .5v5H2" fill="none" stroke="#d8d8d8" stroke-width="1.100"/><path d="M0 5.500L3 3v5z" fill="#d8d8d8"/></svg>
<i style="left:51px;top:115px;width:15px;height:12px;border:1px solid #d8d8d8;background:linear-gradient(90deg,#d0d0d0,#3a3a3a)"></i>
<svg style="left:74px;top:114px" width="8" height="14" viewBox="0 0 9 14"><rect x="1.500" y="1" width="6" height="6" rx="3" fill="none" stroke="#e0e0e0" stroke-width="1.300"/><rect x="1.500" y="7" width="6" height="6" rx="3" fill="none" stroke="#e0e0e0" stroke-width="1.300"/><path d="M4.500 4.500v5" stroke="#e0e0e0" stroke-width="1.300"/></svg>
<i style="left:85.500px;top:107.500px;width:23px;height:28px;background:#fff;border:1px solid #2c2c2c"></i>
<span class="tx" style="left:115px;top:115px;font-size:10.500px">Gradient Map 1</span>
<!-- row 2 -->
<i style="left:30.500px;top:144px;width:22.500px;height:28px;background:#fff;border:1px solid #2c2c2c"></i>
<svg style="left:31.500px;top:145px" width="20.500" height="26" viewBox="0 0 20.500 26"><path d="M11.500 1h9v6h-9z" fill="#ccc"/><path d="M11.500 7h5v5h-5zM16 12h4.500v5H16z" fill="#d8d8d8"/><path d="M2 26c0-6 1-12 3-17 1-4 4-6 7-5 2 .5 3 3 2.500 6l-1 4c1 2 2 4 2.500 6l-2 1-2-3-2 8z" fill="#111"/><path d="M8 8c1.500-1 3-.5 3.500 1.500l-.5 3-2 1.500c-1-1.500-1.500-4-1-6z" fill="#fff"/><path d="M12 10l2.500 4-.5 5-2.500-2z" fill="#fff"/></svg>
<span class="tx" style="left:59px;top:151px;font-size:10.500px;text-decoration:underline">Layer 1</span>
<!-- row 3 -->
<i style="left:31.500px;top:181px;width:21.500px;height:26px;background:#fe14f8"></i>
<svg style="left:29.500px;top:179px" width="25.500" height="30" viewBox="0 0 25.500 30"><path d="M.5 5V.5h5M20 .5h5V5M25 25v4.500h-5M5.500 29.500h-5V25" fill="none" stroke="#f0f0f0" stroke-width="1"/></svg>
<span class="tx" style="left:59px;top:187px;font-size:10.500px">Layer 2</span>
<!-- row 4 -->
<i style="left:30.500px;top:216px;width:22.500px;height:28px;background:#f7a6f2;border:1px solid #2c2c2c"></i>
<svg style="left:31.500px;top:217px" width="20.500" height="26" viewBox="0 0 20.500 26"><path d="M2 26c0-6 1-12 3-17 1-4 4-6 7-5 2 .5 3 3 2.500 6l-1 4c1 2 2 4 2.500 6l-2 1-2-3-2 8z" fill="#3a1a3a"/><path d="M8 8c1.500-1 3-.5 3.500 1.500l-.5 3-2 1.500c-1-1.500-1.500-4-1-6z" fill="#fbe0f8"/><path d="M9 15l3 1 2.500 4-1 6H6z" fill="#fdeafb"/><path d="M12 10l2.500 4-.5 5-2.500-2z" fill="#fbe0f8"/></svg>
<span class="tx" style="left:59px;top:223px;font-size:10.500px">Background</span>
<svg style="left:213px;top:223px" width="9" height="12" viewBox="0 0 9 12"><rect x=".6" y="4.600" width="7.800" height="6.800" fill="none" stroke="#dcdcdc" stroke-width="1.200"/><path d="M2.300 4.500V3a2.200 2.200 0 014.400 0v1.500" fill="none" stroke="#dcdcdc" stroke-width="1.200"/><rect x="3.700" y="7" width="1.600" height="2" fill="#dcdcdc"/></svg>
<!-- bottom bar -->
<i style="left:0;top:329px;width:250px;height:1px;background:#444"></i>
<i style="left:0;top:330px;width:250px;height:20px;background:#535353"></i>
<svg style="left:72px;top:336px" width="13" height="7" viewBox="0 0 13 7"><rect x=".7" y=".7" width="6" height="5.600" rx="2.800" fill="none" stroke="#8c8c8c" stroke-width="1.300"/><rect x="6.300" y=".7" width="6" height="5.600" rx="2.800" fill="none" stroke="#8c8c8c" stroke-width="1.300"/><path d="M4 3.500h5" stroke="#8c8c8c" stroke-width="1.300"/></svg>
<span class="tx" style="left:97px;top:331px;font-size:12.500px;font-style:italic;font-family:'Liberation Serif',serif;color:#dcdcdc">fx</span>
<svg style="left:107px;top:344px" width="4" height="3" viewBox="0 0 4 3"><path d="M0 0h4L2 3z" fill="#dcdcdc"/></svg>
<svg style="left:120px;top:334px" width="12" height="10" viewBox="0 0 12 10"><rect width="12" height="10" rx="1" fill="#dcdcdc"/><circle cx="6" cy="5" r="2.800" fill="#535353"/></svg>
<svg style="left:144px;top:334px" width="12" height="12" viewBox="0 0 12 12"><circle cx="5.500" cy="5.500" r="4.700" fill="none" stroke="#dcdcdc" stroke-width="1.300"/><path d="M2.200 8.800a4.700 4.700 0 006.600-6.600z" fill="#dcdcdc"/><path d="M9 10h3l-1.500 2z" fill="#dcdcdc"/></svg>
<svg style="left:167px;top:334px" width="13" height="10" viewBox="0 0 14 11"><path d="M0 1.500h5l1 1.500h8v8H0z" fill="#dcdcdc"/><path d="M0 3.700h14" stroke="#8a8a8a" stroke-width=".6"/></svg>
<svg style="left:192px;top:334px" width="11" height="11" viewBox="0 0 11 11"><rect x=".6" y=".6" width="9.800" height="9.800" rx="1" fill="none" stroke="#dcdcdc" stroke-width="1.200"/><path d="M5.500 3v5M3 5.500h5" stroke="#dcdcdc" stroke-width="1.300"/></svg>
<svg style="left:215px;top:333px" width="10" height="12" viewBox="0 0 10 12"><path d="M1 3h8l-.7 8.500H1.700zM0 2.500h10M3.500 2.500V.8h3v1.700" fill="none" stroke="#dcdcdc" stroke-width="1.100"/><path d="M3.500 5v4.500M5 5v4.500M6.500 5v4.500" stroke="#dcdcdc" stroke-width=".8"/></svg>
</div>

</div>
</body></html>
